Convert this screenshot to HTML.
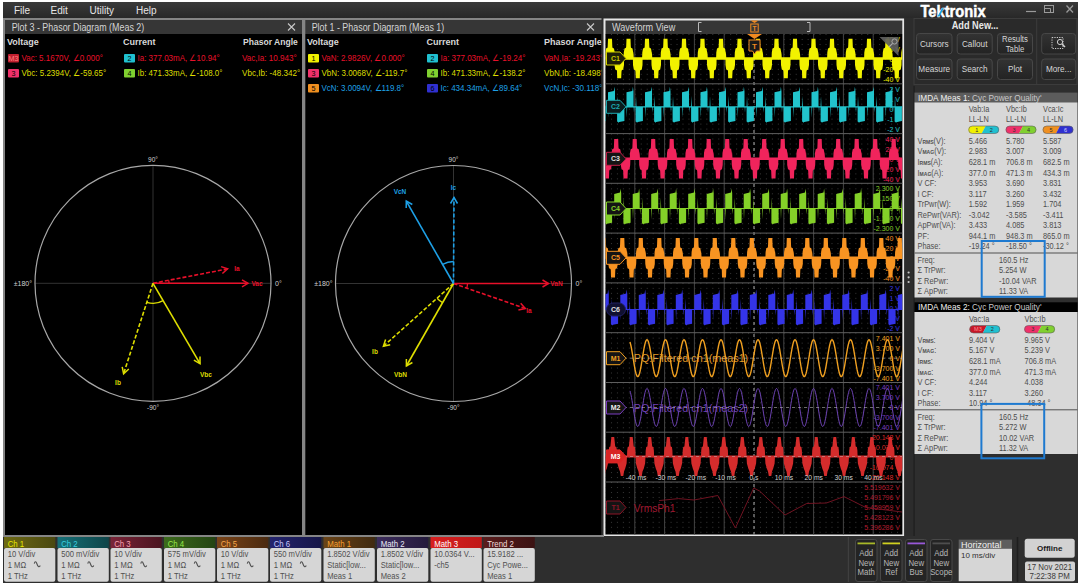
<!DOCTYPE html>
<html><head><meta charset="utf-8"><style>
html,body{margin:0;padding:0;background:#fff;width:1080px;height:586px;overflow:hidden}
svg{display:block;font-family:"Liberation Sans", sans-serif}
</style></head><body>
<svg width="1080" height="586" viewBox="0 0 1080 586">
<rect x="3" y="2" width="1075" height="581" fill="#2e2e2e" />
<defs><linearGradient id="mb" x1="0" y1="0" x2="0" y2="1"><stop offset="0" stop-color="#3a3a3a"/><stop offset="1" stop-color="#282828"/></linearGradient></defs>
<rect x="3" y="2" width="1075" height="16" fill="url(#mb)" />
<text x="14" y="14" font-size="10" fill="#e6e6e6" font-weight="normal" text-anchor="start"  >File</text>
<text x="50.5" y="14" font-size="10" fill="#e6e6e6" font-weight="normal" text-anchor="start"  >Edit</text>
<text x="89.5" y="14" font-size="10" fill="#e6e6e6" font-weight="normal" text-anchor="start"  >Utility</text>
<text x="136" y="14" font-size="10" fill="#e6e6e6" font-weight="normal" text-anchor="start"  >Help</text>
<rect x="3" y="18" width="302" height="518" fill="#858585" />
<rect x="5" y="20" width="298" height="14" fill="#363636" />
<rect x="5" y="34" width="298" height="501" fill="#000" />
<text x="11.7" y="30.5" font-size="10" fill="#d4d4d4" font-weight="normal" text-anchor="start" textLength="132.55" lengthAdjust="spacingAndGlyphs" >Plot 3 - Phasor Diagram (Meas 2)</text>
<path d="M288.0 23.5L295.0 30.5M295.0 23.5L288.0 30.5" stroke="#c8c8c8" stroke-width="1.1"/>
<rect x="303" y="18" width="301" height="518" fill="#858585" />
<rect x="305" y="20" width="297" height="14" fill="#363636" />
<rect x="305" y="34" width="297" height="501" fill="#000" />
<text x="311.7" y="30.5" font-size="10" fill="#d4d4d4" font-weight="normal" text-anchor="start" textLength="132.55" lengthAdjust="spacingAndGlyphs" >Plot 1 - Phasor Diagram (Meas 1)</text>
<path d="M587.0 23.5L594.0 30.5M594.0 23.5L587.0 30.5" stroke="#c8c8c8" stroke-width="1.1"/>
<rect x="601.5" y="18" width="2.5" height="518" fill="#2e2e2e" />
<rect x="302" y="18" width="3.3" height="518" fill="#858585" />
<text x="7" y="45" font-size="9" fill="#d8d8d8" font-weight="bold" text-anchor="start"  >Voltage</text>
<text x="123" y="45" font-size="9" fill="#d8d8d8" font-weight="bold" text-anchor="start"  >Current</text>
<text x="243" y="45" font-size="9" fill="#d8d8d8" font-weight="bold" text-anchor="start" textLength="54.79" lengthAdjust="spacingAndGlyphs" >Phasor Angle</text>
<rect x="8" y="54.0" width="11" height="8.5" fill="#c02030" rx="1"/>
<text x="13.5" y="60.9" font-size="7.2" fill="#ff8080" font-weight="normal" text-anchor="middle"  >M3</text>
<text x="21.5" y="60.5" font-size="9" fill="#e8102a" font-weight="normal" text-anchor="start" textLength="81.37" lengthAdjust="spacingAndGlyphs" >Vac: 5.1670V, ∠0.000°</text>
<rect x="124" y="54.0" width="11" height="8.5" fill="#20c0d0" rx="1"/>
<text x="129.5" y="60.9" font-size="7.2" fill="#000" font-weight="normal" text-anchor="middle"  >2</text>
<text x="137.5" y="60.5" font-size="9" fill="#e8102a" font-weight="normal" text-anchor="start" textLength="82.26" lengthAdjust="spacingAndGlyphs" >Ia: 377.03mA, ∠10.94°</text>
<text x="242" y="60.5" font-size="9" fill="#e8102a" font-weight="normal" text-anchor="start" textLength="54.87" lengthAdjust="spacingAndGlyphs" >Vac,Ia: 10.943°</text>
<rect x="8" y="69.0" width="11" height="8.5" fill="#f0306a" rx="1"/>
<text x="13.5" y="75.9" font-size="7.2" fill="#000" font-weight="normal" text-anchor="middle"  >3</text>
<text x="21.5" y="75.5" font-size="9" fill="#dede00" font-weight="normal" text-anchor="start" textLength="84.67" lengthAdjust="spacingAndGlyphs" >Vbc: 5.2394V, ∠-59.65°</text>
<rect x="124" y="69.0" width="11" height="8.5" fill="#80d030" rx="1"/>
<text x="129.5" y="75.9" font-size="7.2" fill="#000" font-weight="normal" text-anchor="middle"  >4</text>
<text x="137.5" y="75.5" font-size="9" fill="#dede00" font-weight="normal" text-anchor="start" textLength="84.96" lengthAdjust="spacingAndGlyphs" >Ib: 471.33mA, ∠-108.0°</text>
<text x="242" y="75.5" font-size="9" fill="#dede00" font-weight="normal" text-anchor="start" textLength="58.17" lengthAdjust="spacingAndGlyphs" >Vbc,Ib: -48.342°</text>
<text x="307" y="45" font-size="9" fill="#d8d8d8" font-weight="bold" text-anchor="start"  >Voltage</text>
<text x="426.5" y="45" font-size="9" fill="#d8d8d8" font-weight="bold" text-anchor="start"  >Current</text>
<text x="544" y="45" font-size="9" fill="#d8d8d8" font-weight="bold" text-anchor="start"  >Phasor Angle</text>
<rect x="308" y="54.0" width="11" height="8.5" fill="#f0f000" rx="1"/>
<text x="313.5" y="60.9" font-size="7.2" fill="#000" font-weight="normal" text-anchor="middle"  >1</text>
<text x="321.5" y="60.5" font-size="9" fill="#e8102a" font-weight="normal" text-anchor="start" textLength="83.17" lengthAdjust="spacingAndGlyphs" >VaN: 2.9826V, ∠0.000°</text>
<rect x="427" y="54.0" width="11" height="8.5" fill="#20c0d0" rx="1"/>
<text x="432.5" y="60.9" font-size="7.2" fill="#000" font-weight="normal" text-anchor="middle"  >2</text>
<text x="440.5" y="60.5" font-size="9" fill="#e8102a" font-weight="normal" text-anchor="start" textLength="84.96" lengthAdjust="spacingAndGlyphs" >Ia: 377.03mA, ∠-19.24°</text>
<text x="544" y="60.5" font-size="9" fill="#e8102a" font-weight="normal" text-anchor="start" textLength="59.37" lengthAdjust="spacingAndGlyphs" >VaN,Ia: -19.243°</text>
<rect x="308" y="69.0" width="11" height="8.5" fill="#f0306a" rx="1"/>
<text x="313.5" y="75.9" font-size="7.2" fill="#000" font-weight="normal" text-anchor="middle"  >3</text>
<text x="321.5" y="75.5" font-size="9" fill="#dede00" font-weight="normal" text-anchor="start" textLength="85.87" lengthAdjust="spacingAndGlyphs" >VbN: 3.0068V, ∠-119.7°</text>
<rect x="427" y="69.0" width="11" height="8.5" fill="#80d030" rx="1"/>
<text x="432.5" y="75.9" font-size="7.2" fill="#000" font-weight="normal" text-anchor="middle"  >4</text>
<text x="440.5" y="75.5" font-size="9" fill="#dede00" font-weight="normal" text-anchor="start" textLength="84.96" lengthAdjust="spacingAndGlyphs" >Ib: 471.33mA, ∠-138.2°</text>
<text x="544" y="75.5" font-size="9" fill="#dede00" font-weight="normal" text-anchor="start" textLength="59.97" lengthAdjust="spacingAndGlyphs" >VbN,Ib: -18.498°</text>
<rect x="308" y="84.0" width="11" height="8.5" fill="#f09020" rx="1"/>
<text x="313.5" y="90.9" font-size="7.2" fill="#000" font-weight="normal" text-anchor="middle"  >5</text>
<text x="321.5" y="90.5" font-size="9" fill="#1ea0e6" font-weight="normal" text-anchor="start" textLength="82.72" lengthAdjust="spacingAndGlyphs" >VcN: 3.0094V, ∠119.8°</text>
<rect x="427" y="84.0" width="11" height="8.5" fill="#3030d0" rx="1"/>
<text x="432.5" y="90.9" font-size="7.2" fill="#000" font-weight="normal" text-anchor="middle"  >6</text>
<text x="440.5" y="90.5" font-size="9" fill="#1ea0e6" font-weight="normal" text-anchor="start" textLength="81.80" lengthAdjust="spacingAndGlyphs" >Ic: 434.34mA, ∠89.64°</text>
<text x="544" y="90.5" font-size="9" fill="#1ea0e6" font-weight="normal" text-anchor="start" textLength="58.46" lengthAdjust="spacingAndGlyphs" >VcN,Ic: -30.118°</text>
<rect x="601.5" y="34" width="2.5" height="501" fill="#2e2e2e" />
<line x1="35" y1="283.3" x2="271" y2="283.3" stroke="#333333" stroke-width="1"/>
<line x1="153" y1="165.3" x2="153" y2="401.3" stroke="#333333" stroke-width="1"/>
<circle cx="153" cy="283.3" r="118" fill="none" stroke="#a8a8a8" stroke-width="1.2"/>
<text x="153" y="161.8" font-size="6.5" fill="#d0d0d0" font-weight="normal" text-anchor="middle"  >90°</text>
<text x="153" y="410.1" font-size="6.5" fill="#d0d0d0" font-weight="normal" text-anchor="middle"  >-90°</text>
<text x="32" y="285.6" font-size="7" fill="#d0d0d0" font-weight="normal" text-anchor="end"  >±180°</text>
<text x="275" y="285.6" font-size="7" fill="#d0d0d0" font-weight="normal" text-anchor="start"  >0°</text>
<line x1="153" y1="283.3" x2="248.0" y2="283.3" stroke="#e8102a" stroke-width="1.6" />
<path d="M242.0 279.8L248.0 283.3L242.0 286.8" fill="none" stroke="#e8102a" stroke-width="1.5"/>
<text x="257" y="286" font-size="6.5" fill="#e8102a" font-weight="bold" text-anchor="middle"  >Vac</text>
<line x1="153" y1="283.3" x2="227.6" y2="268.9" stroke="#e8102a" stroke-width="1.6" stroke-dasharray="4 2"/>
<path d="M221.1 266.6L227.6 268.9L222.4 273.5" fill="none" stroke="#e8102a" stroke-width="1.5"/>
<text x="237" y="271" font-size="6.5" fill="#e8102a" font-weight="bold" text-anchor="middle"  >Ia</text>
<line x1="153" y1="283.3" x2="200.0" y2="363.6" stroke="#dede00" stroke-width="1.6" />
<path d="M200.0 356.6L200.0 363.6L193.9 360.1" fill="none" stroke="#dede00" stroke-width="1.5"/>
<text x="206" y="377" font-size="6.5" fill="#dede00" font-weight="bold" text-anchor="middle"  >Vbc</text>
<line x1="153" y1="283.3" x2="123.6" y2="373.7" stroke="#dede00" stroke-width="1.6" stroke-dasharray="4 2"/>
<path d="M128.8 369.0L123.6 373.7L122.2 366.9" fill="none" stroke="#dede00" stroke-width="1.5"/>
<text x="118" y="385" font-size="6.5" fill="#dede00" font-weight="bold" text-anchor="middle"  >Ib</text>
<path d="M169.0 283.3A16 16 0 0 0 168.7 280.3" fill="none" stroke="#e8102a" stroke-width="1.3"/>
<path d="M146.8 302.3A20 20 0 0 0 163.1 300.6" fill="none" stroke="#dede00" stroke-width="1.3"/>
<line x1="335.5" y1="283.5" x2="571.5" y2="283.5" stroke="#333333" stroke-width="1"/>
<line x1="453.5" y1="165.5" x2="453.5" y2="401.5" stroke="#333333" stroke-width="1"/>
<circle cx="453.5" cy="283.5" r="118" fill="none" stroke="#a8a8a8" stroke-width="1.2"/>
<text x="453.5" y="162.0" font-size="6.5" fill="#d0d0d0" font-weight="normal" text-anchor="middle"  >90°</text>
<text x="453.5" y="410.3" font-size="6.5" fill="#d0d0d0" font-weight="normal" text-anchor="middle"  >-90°</text>
<text x="332.5" y="285.8" font-size="7" fill="#d0d0d0" font-weight="normal" text-anchor="end"  >±180°</text>
<text x="575.5" y="285.8" font-size="7" fill="#d0d0d0" font-weight="normal" text-anchor="start"  >0°</text>
<line x1="453.5" y1="283.5" x2="548.5" y2="283.5" stroke="#e8102a" stroke-width="1.6" />
<path d="M542.5 280.0L548.5 283.5L542.5 287.0" fill="none" stroke="#e8102a" stroke-width="1.5"/>
<text x="556.5" y="286" font-size="6.5" fill="#e8102a" font-weight="bold" text-anchor="middle"  >VaN</text>
<line x1="453.5" y1="283.5" x2="525.3" y2="308.5" stroke="#e8102a" stroke-width="1.6" stroke-dasharray="4 2"/>
<path d="M520.7 303.3L525.3 308.5L518.4 309.9" fill="none" stroke="#e8102a" stroke-width="1.5"/>
<text x="529" y="313" font-size="6.5" fill="#e8102a" font-weight="bold" text-anchor="middle"  >Ia</text>
<line x1="453.5" y1="283.5" x2="406.4" y2="366.0" stroke="#dede00" stroke-width="1.6" />
<path d="M412.4 362.5L406.4 366.0L406.4 359.1" fill="none" stroke="#dede00" stroke-width="1.5"/>
<text x="400.5" y="377" font-size="6.5" fill="#dede00" font-weight="bold" text-anchor="middle"  >VbN</text>
<line x1="453.5" y1="283.5" x2="383.4" y2="346.2" stroke="#dede00" stroke-width="1.6" stroke-dasharray="4 2"/>
<path d="M390.2 344.8L383.4 346.2L385.6 339.5" fill="none" stroke="#dede00" stroke-width="1.5"/>
<text x="375" y="354" font-size="6.5" fill="#dede00" font-weight="bold" text-anchor="middle"  >Ib</text>
<line x1="453.5" y1="283.5" x2="406.3" y2="201.1" stroke="#1ea0e6" stroke-width="1.6" />
<path d="M406.2 208.0L406.3 201.1L412.3 204.5" fill="none" stroke="#1ea0e6" stroke-width="1.5"/>
<text x="400" y="194" font-size="6.5" fill="#1ea0e6" font-weight="bold" text-anchor="middle"  >VcN</text>
<line x1="453.5" y1="283.5" x2="454.0" y2="197.5" stroke="#1ea0e6" stroke-width="1.6" stroke-dasharray="4 2"/>
<path d="M450.5 203.5L454.0 197.5L457.5 203.5" fill="none" stroke="#1ea0e6" stroke-width="1.5"/>
<text x="453.5" y="190" font-size="6.5" fill="#1ea0e6" font-weight="bold" text-anchor="middle"  >Ic</text>
<path d="M466.7 288.1A14 14 0 0 0 467.5 283.5" fill="none" stroke="#e8102a" stroke-width="1.3"/>
<path d="M437.1 298.2A22 22 0 0 0 442.6 302.6" fill="none" stroke="#dede00" stroke-width="1.3"/>
<path d="M453.6 261.5A22 22 0 0 0 442.6 264.4" fill="none" stroke="#1ea0e6" stroke-width="1.3"/>
<rect x="603.5" y="18.5" width="300.8" height="518" fill="#e6e6e6" />
<rect x="605.5" y="20.5" width="296.8" height="13.5" fill="#363636" />
<rect x="605.5" y="34" width="296.8" height="500.5" fill="#000" />
<text x="612" y="30.5" font-size="10" fill="#d4d4d4" font-weight="normal" text-anchor="start" textLength="63.21" lengthAdjust="spacingAndGlyphs" >Waveform View</text>
<path d="M701.5 22.5H698.5V31.5H701.5M807 22.5H810V31.5H807" fill="none" stroke="#b8b8b8" stroke-width="1"/>
<path d="M750.5 20.5H758.5L754.5 23z" fill="#f08a20"/>
<rect x="750.8" y="24" width="7.4" height="8" fill="none" stroke="#f08a20" stroke-width="1"/>
<text x="754.5" y="30.8" font-size="6.5" fill="#f08a20" font-weight="bold" text-anchor="middle"  >T</text>
<clipPath id="wc"><rect x="605.5" y="34" width="296.8" height="500.5"/></clipPath>
<g clip-path="url(#wc)">
<defs><pattern id="dots" patternUnits="userSpaceOnUse" x="754" y="34" width="5.96" height="4.978"><rect x="0" y="0" width="1" height="1" fill="#363636"/></pattern></defs>
<rect x="605.5" y="34" width="297" height="501" fill="url(#dots)"/>
<line x1="605.0" y1="34" x2="605.0" y2="535" stroke="#444444" stroke-width="1"/>
<line x1="634.8" y1="34" x2="634.8" y2="535" stroke="#444444" stroke-width="1"/>
<line x1="664.6" y1="34" x2="664.6" y2="535" stroke="#444444" stroke-width="1"/>
<line x1="694.4" y1="34" x2="694.4" y2="535" stroke="#444444" stroke-width="1"/>
<line x1="724.2" y1="34" x2="724.2" y2="535" stroke="#444444" stroke-width="1"/>
<line x1="754.0" y1="34" x2="754.0" y2="535" stroke="#b0b0b0" stroke-width="1" stroke-dasharray="3 3"/>
<line x1="783.8" y1="34" x2="783.8" y2="535" stroke="#444444" stroke-width="1"/>
<line x1="813.6" y1="34" x2="813.6" y2="535" stroke="#444444" stroke-width="1"/>
<line x1="843.4" y1="34" x2="843.4" y2="535" stroke="#444444" stroke-width="1"/>
<line x1="873.2" y1="34" x2="873.2" y2="535" stroke="#444444" stroke-width="1"/>
<line x1="903.0" y1="34" x2="903.0" y2="535" stroke="#444444" stroke-width="1"/>
<line x1="605" y1="83.8" x2="903" y2="83.8" stroke="#5e5e5e" stroke-width="1"/>
<line x1="605" y1="133.6" x2="903" y2="133.6" stroke="#5e5e5e" stroke-width="1"/>
<line x1="605" y1="183.3" x2="903" y2="183.3" stroke="#5e5e5e" stroke-width="1"/>
<line x1="605" y1="233.1" x2="903" y2="233.1" stroke="#5e5e5e" stroke-width="1"/>
<line x1="605" y1="282.9" x2="903" y2="282.9" stroke="#5e5e5e" stroke-width="1"/>
<line x1="605" y1="332.7" x2="903" y2="332.7" stroke="#5e5e5e" stroke-width="1"/>
<line x1="605" y1="382.5" x2="903" y2="382.5" stroke="#5e5e5e" stroke-width="1"/>
<line x1="605" y1="432.2" x2="903" y2="432.2" stroke="#5e5e5e" stroke-width="1"/>
<line x1="605" y1="482.0" x2="903" y2="482.0" stroke="#5e5e5e" stroke-width="1"/>
<text x="900" y="42.0" font-size="7" fill="#f2f200" font-weight="normal" text-anchor="end"  >40 V</text>
<text x="900" y="52.0" font-size="7" fill="#f2f200" font-weight="normal" text-anchor="end"  >20 V</text>
<text x="900" y="62.0" font-size="7" fill="#f2f200" font-weight="normal" text-anchor="end"  >0 V</text>
<text x="900" y="72.0" font-size="7" fill="#f2f200" font-weight="normal" text-anchor="end"  >-20 V</text>
<text x="900" y="82.0" font-size="7" fill="#f2f200" font-weight="normal" text-anchor="end"  >-40 V</text>
<text x="900" y="91.78" font-size="7" fill="#22c4cc" font-weight="normal" text-anchor="end"  >2 V</text>
<text x="900" y="101.78" font-size="7" fill="#22c4cc" font-weight="normal" text-anchor="end"  >1 V</text>
<text x="900" y="111.78" font-size="7" fill="#22c4cc" font-weight="normal" text-anchor="end"  >0 V</text>
<text x="900" y="121.78" font-size="7" fill="#22c4cc" font-weight="normal" text-anchor="end"  >-1 V</text>
<text x="900" y="131.78" font-size="7" fill="#22c4cc" font-weight="normal" text-anchor="end"  >-2 V</text>
<text x="900" y="141.56" font-size="7" fill="#f0245c" font-weight="normal" text-anchor="end"  >40 V</text>
<text x="900" y="151.56" font-size="7" fill="#f0245c" font-weight="normal" text-anchor="end"  >20 V</text>
<text x="900" y="161.56" font-size="7" fill="#f0245c" font-weight="normal" text-anchor="end"  >0 V</text>
<text x="900" y="171.56" font-size="7" fill="#f0245c" font-weight="normal" text-anchor="end"  >-20 V</text>
<text x="900" y="181.56" font-size="7" fill="#f0245c" font-weight="normal" text-anchor="end"  >-40 V</text>
<text x="900" y="191.34" font-size="7" fill="#84d028" font-weight="normal" text-anchor="end"  >2.300 V</text>
<text x="900" y="201.34" font-size="7" fill="#84d028" font-weight="normal" text-anchor="end"  >1.150 V</text>
<text x="900" y="211.34" font-size="7" fill="#84d028" font-weight="normal" text-anchor="end"  >0 V</text>
<text x="900" y="221.34" font-size="7" fill="#84d028" font-weight="normal" text-anchor="end"  >-1.150 V</text>
<text x="900" y="231.34" font-size="7" fill="#84d028" font-weight="normal" text-anchor="end"  >-2.300 V</text>
<text x="900" y="241.12" font-size="7" fill="#f89422" font-weight="normal" text-anchor="end"  >40 V</text>
<text x="900" y="251.12" font-size="7" fill="#f89422" font-weight="normal" text-anchor="end"  >20 V</text>
<text x="900" y="261.12" font-size="7" fill="#f89422" font-weight="normal" text-anchor="end"  >0 V</text>
<text x="900" y="271.12" font-size="7" fill="#f89422" font-weight="normal" text-anchor="end"  >-20 V</text>
<text x="900" y="281.12" font-size="7" fill="#f89422" font-weight="normal" text-anchor="end"  >-40 V</text>
<text x="900" y="290.9" font-size="7" fill="#3434e8" font-weight="normal" text-anchor="end"  >2 V</text>
<text x="900" y="300.9" font-size="7" fill="#3434e8" font-weight="normal" text-anchor="end"  >1 V</text>
<text x="900" y="310.9" font-size="7" fill="#3434e8" font-weight="normal" text-anchor="end"  >0 V</text>
<text x="900" y="320.9" font-size="7" fill="#3434e8" font-weight="normal" text-anchor="end"  >-1 V</text>
<text x="900" y="330.9" font-size="7" fill="#3434e8" font-weight="normal" text-anchor="end"  >-2 V</text>
<text x="900" y="340.68" font-size="7" fill="#f0a020" font-weight="normal" text-anchor="end"  >7.401 V</text>
<text x="900" y="350.68" font-size="7" fill="#f0a020" font-weight="normal" text-anchor="end"  >3.700 V</text>
<text x="900" y="360.68" font-size="7" fill="#f0a020" font-weight="normal" text-anchor="end"  >0 V</text>
<text x="900" y="370.68" font-size="7" fill="#f0a020" font-weight="normal" text-anchor="end"  >-3.700 V</text>
<text x="900" y="380.68" font-size="7" fill="#f0a020" font-weight="normal" text-anchor="end"  >-7.401 V</text>
<text x="900" y="390.46000000000004" font-size="7" fill="#7a3cc0" font-weight="normal" text-anchor="end"  >7.401 V</text>
<text x="900" y="400.46000000000004" font-size="7" fill="#7a3cc0" font-weight="normal" text-anchor="end"  >3.700 V</text>
<text x="900" y="410.46000000000004" font-size="7" fill="#7a3cc0" font-weight="normal" text-anchor="end"  >0 V</text>
<text x="900" y="420.46000000000004" font-size="7" fill="#7a3cc0" font-weight="normal" text-anchor="end"  >-3.700 V</text>
<text x="900" y="430.46000000000004" font-size="7" fill="#7a3cc0" font-weight="normal" text-anchor="end"  >-7.401 V</text>
<text x="900" y="440.24" font-size="7" fill="#dc2626" font-weight="normal" text-anchor="end"  >20.148 V</text>
<text x="900" y="450.24" font-size="7" fill="#dc2626" font-weight="normal" text-anchor="end"  >10.074 V</text>
<text x="900" y="460.24" font-size="7" fill="#dc2626" font-weight="normal" text-anchor="end"  >0 V</text>
<text x="900" y="470.24" font-size="7" fill="#dc2626" font-weight="normal" text-anchor="end"  >-10.074 V</text>
<text x="900" y="480.24" font-size="7" fill="#dc2626" font-weight="normal" text-anchor="end"  >-20.148 V</text>
<text x="900" y="490.02" font-size="7" fill="#b01a2c" font-weight="normal" text-anchor="end"  >5.519632 V</text>
<text x="900" y="500.02" font-size="7" fill="#b01a2c" font-weight="normal" text-anchor="end"  >5.491796 V</text>
<text x="900" y="510.02" font-size="7" fill="#b01a2c" font-weight="normal" text-anchor="end"  >5.459959 V</text>
<text x="900" y="520.02" font-size="7" fill="#b01a2c" font-weight="normal" text-anchor="end"  >5.428123 V</text>
<text x="900" y="530.02" font-size="7" fill="#b01a2c" font-weight="normal" text-anchor="end"  >5.396286 V</text>
<path d="M600 57.3H905V59.7H600ZM568.1 58.5L568.3 52.5L569.0 48.5L570.5 47.8L570.7 46.5L571.0 38.7L575.0 38.7L575.3 46.5L575.5 47.8L577.0 48.5L577.7 52.5L577.9 58.5ZM587.1 58.5L587.0 65.1L586.2 69.5L584.8 70.2L584.5 71.5L584.2 78.3L580.2 78.3L580.0 71.5L579.8 70.2L578.2 69.5L577.5 65.1L577.4 58.5ZM577.6 58.5L577.9 51.5L578.3 58.5ZM586.6 58.5L586.8 52.5L587.5 48.5L589.0 47.8L589.2 46.5L589.5 38.7L593.5 38.7L593.8 46.5L594.0 47.8L595.5 48.5L596.2 52.5L596.4 58.5ZM605.6 58.5L605.5 65.1L604.8 69.5L603.2 70.2L603.0 71.5L602.8 78.3L598.8 78.3L598.5 71.5L598.2 70.2L596.8 69.5L596.0 65.1L595.9 58.5ZM596.1 58.5L596.4 51.5L596.8 58.5ZM605.1 58.5L605.3 52.5L606.0 48.5L607.5 47.8L607.7 46.5L608.0 38.7L612.0 38.7L612.3 46.5L612.5 47.8L614.0 48.5L614.7 52.5L614.9 58.5ZM624.1 58.5L624.0 65.1L623.2 69.5L621.8 70.2L621.5 71.5L621.2 78.3L617.2 78.3L617.0 71.5L616.8 70.2L615.2 69.5L614.5 65.1L614.4 58.5ZM614.6 58.5L614.9 51.5L615.3 58.5ZM623.6 58.5L623.8 52.5L624.5 48.5L626.0 47.8L626.2 46.5L626.5 38.7L630.5 38.7L630.8 46.5L631.0 47.8L632.5 48.5L633.2 52.5L633.4 58.5ZM642.6 58.5L642.5 65.1L641.8 69.5L640.2 70.2L640.0 71.5L639.8 78.3L635.8 78.3L635.5 71.5L635.2 70.2L633.8 69.5L633.0 65.1L632.9 58.5ZM633.1 58.5L633.4 51.5L633.8 58.5ZM642.1 58.5L642.3 52.5L643.0 48.5L644.5 47.8L644.7 46.5L645.0 38.7L649.0 38.7L649.3 46.5L649.5 47.8L651.0 48.5L651.7 52.5L651.9 58.5ZM661.1 58.5L661.0 65.1L660.2 69.5L658.8 70.2L658.5 71.5L658.2 78.3L654.2 78.3L654.0 71.5L653.8 70.2L652.2 69.5L651.5 65.1L651.4 58.5ZM651.6 58.5L651.9 51.5L652.3 58.5ZM660.6 58.5L660.8 52.5L661.5 48.5L663.0 47.8L663.2 46.5L663.5 38.7L667.5 38.7L667.8 46.5L668.0 47.8L669.5 48.5L670.2 52.5L670.4 58.5ZM679.6 58.5L679.5 65.1L678.8 69.5L677.2 70.2L677.0 71.5L676.8 78.3L672.8 78.3L672.5 71.5L672.2 70.2L670.8 69.5L670.0 65.1L669.9 58.5ZM670.1 58.5L670.4 51.5L670.8 58.5ZM679.1 58.5L679.3 52.5L680.0 48.5L681.5 47.8L681.7 46.5L682.0 38.7L686.0 38.7L686.3 46.5L686.5 47.8L688.0 48.5L688.7 52.5L688.9 58.5ZM698.1 58.5L698.0 65.1L697.2 69.5L695.8 70.2L695.5 71.5L695.2 78.3L691.2 78.3L691.0 71.5L690.8 70.2L689.2 69.5L688.5 65.1L688.4 58.5ZM688.6 58.5L688.9 51.5L689.3 58.5ZM697.6 58.5L697.8 52.5L698.5 48.5L700.0 47.8L700.2 46.5L700.5 38.7L704.5 38.7L704.8 46.5L705.0 47.8L706.5 48.5L707.2 52.5L707.4 58.5ZM716.6 58.5L716.5 65.1L715.8 69.5L714.2 70.2L714.0 71.5L713.8 78.3L709.8 78.3L709.5 71.5L709.2 70.2L707.8 69.5L707.0 65.1L706.9 58.5ZM707.1 58.5L707.4 51.5L707.8 58.5ZM716.1 58.5L716.3 52.5L717.0 48.5L718.5 47.8L718.7 46.5L719.0 38.7L723.0 38.7L723.3 46.5L723.5 47.8L725.0 48.5L725.7 52.5L725.9 58.5ZM735.1 58.5L735.0 65.1L734.2 69.5L732.8 70.2L732.5 71.5L732.2 78.3L728.2 78.3L728.0 71.5L727.8 70.2L726.2 69.5L725.5 65.1L725.4 58.5ZM725.6 58.5L725.9 51.5L726.3 58.5ZM734.6 58.5L734.8 52.5L735.5 48.5L737.0 47.8L737.2 46.5L737.5 38.7L741.5 38.7L741.8 46.5L742.0 47.8L743.5 48.5L744.2 52.5L744.4 58.5ZM753.6 58.5L753.5 65.1L752.8 69.5L751.2 70.2L751.0 71.5L750.8 78.3L746.8 78.3L746.5 71.5L746.2 70.2L744.8 69.5L744.0 65.1L743.9 58.5ZM744.1 58.5L744.4 51.5L744.8 58.5ZM753.1 58.5L753.3 52.5L754.0 48.5L755.5 47.8L755.7 46.5L756.0 38.7L760.0 38.7L760.3 46.5L760.5 47.8L762.0 48.5L762.7 52.5L762.9 58.5ZM772.1 58.5L772.0 65.1L771.2 69.5L769.8 70.2L769.5 71.5L769.2 78.3L765.2 78.3L765.0 71.5L764.8 70.2L763.2 69.5L762.5 65.1L762.4 58.5ZM762.6 58.5L762.9 51.5L763.3 58.5ZM771.6 58.5L771.8 52.5L772.5 48.5L774.0 47.8L774.2 46.5L774.5 38.7L778.5 38.7L778.8 46.5L779.0 47.8L780.5 48.5L781.2 52.5L781.4 58.5ZM790.6 58.5L790.5 65.1L789.8 69.5L788.2 70.2L788.0 71.5L787.8 78.3L783.8 78.3L783.5 71.5L783.2 70.2L781.8 69.5L781.0 65.1L780.9 58.5ZM781.1 58.5L781.4 51.5L781.8 58.5ZM790.1 58.5L790.3 52.5L791.0 48.5L792.5 47.8L792.7 46.5L793.0 38.7L797.0 38.7L797.3 46.5L797.5 47.8L799.0 48.5L799.7 52.5L799.9 58.5ZM809.1 58.5L809.0 65.1L808.2 69.5L806.8 70.2L806.5 71.5L806.2 78.3L802.2 78.3L802.0 71.5L801.8 70.2L800.2 69.5L799.5 65.1L799.4 58.5ZM799.6 58.5L799.9 51.5L800.3 58.5ZM808.6 58.5L808.8 52.5L809.5 48.5L811.0 47.8L811.2 46.5L811.5 38.7L815.5 38.7L815.8 46.5L816.0 47.8L817.5 48.5L818.2 52.5L818.4 58.5ZM827.6 58.5L827.5 65.1L826.8 69.5L825.2 70.2L825.0 71.5L824.8 78.3L820.8 78.3L820.5 71.5L820.2 70.2L818.8 69.5L818.0 65.1L817.9 58.5ZM818.1 58.5L818.4 51.5L818.8 58.5ZM827.1 58.5L827.3 52.5L828.0 48.5L829.5 47.8L829.7 46.5L830.0 38.7L834.0 38.7L834.3 46.5L834.5 47.8L836.0 48.5L836.7 52.5L836.9 58.5ZM846.1 58.5L846.0 65.1L845.2 69.5L843.8 70.2L843.5 71.5L843.2 78.3L839.2 78.3L839.0 71.5L838.8 70.2L837.2 69.5L836.5 65.1L836.4 58.5ZM836.6 58.5L836.9 51.5L837.3 58.5ZM845.6 58.5L845.8 52.5L846.5 48.5L848.0 47.8L848.2 46.5L848.5 38.7L852.5 38.7L852.8 46.5L853.0 47.8L854.5 48.5L855.2 52.5L855.4 58.5ZM864.6 58.5L864.5 65.1L863.8 69.5L862.2 70.2L862.0 71.5L861.8 78.3L857.8 78.3L857.5 71.5L857.2 70.2L855.8 69.5L855.0 65.1L854.9 58.5ZM855.1 58.5L855.4 51.5L855.8 58.5ZM864.1 58.5L864.3 52.5L865.0 48.5L866.5 47.8L866.7 46.5L867.0 38.7L871.0 38.7L871.3 46.5L871.5 47.8L873.0 48.5L873.7 52.5L873.9 58.5ZM883.1 58.5L883.0 65.1L882.2 69.5L880.8 70.2L880.5 71.5L880.2 78.3L876.2 78.3L876.0 71.5L875.8 70.2L874.2 69.5L873.5 65.1L873.4 58.5ZM873.6 58.5L873.9 51.5L874.3 58.5ZM882.6 58.5L882.8 52.5L883.5 48.5L885.0 47.8L885.2 46.5L885.5 38.7L889.5 38.7L889.8 46.5L890.0 47.8L891.5 48.5L892.2 52.5L892.4 58.5ZM901.6 58.5L901.5 65.1L900.8 69.5L899.2 70.2L899.0 71.5L898.8 78.3L894.8 78.3L894.5 71.5L894.2 70.2L892.8 69.5L892.0 65.1L891.9 58.5ZM892.1 58.5L892.4 51.5L892.8 58.5ZM901.1 58.5L901.3 52.5L902.0 48.5L903.5 47.8L903.7 46.5L904.0 38.7L908.0 38.7L908.3 46.5L908.5 47.8L910.0 48.5L910.7 52.5L910.9 58.5ZM920.1 58.5L920.0 65.1L919.2 69.5L917.8 70.2L917.5 71.5L917.2 78.3L913.2 78.3L913.0 71.5L912.8 70.2L911.2 69.5L910.5 65.1L910.4 58.5ZM910.6 58.5L910.9 51.5L911.3 58.5Z" fill="#f2f200" opacity="1"/>
<path d="M600 106.2H905V107.39999999999999H600ZM571.0 106.8V92.3L576.8 90.9L577.4 86.8L578.0 91.5V106.8ZM587.4 106.8V121.1L582.2 122.1L581.5 122.8L580.9 122.1L580.1 121.6V106.8ZM571.7 106.8L571.3 117.8L570.9 106.8ZM578.9 106.8L578.5 112.8L578.1 106.8ZM580.1 106.8L580.5 95.8L581.0 106.8ZM589.5 106.8V92.3L595.3 90.9L595.9 86.8L596.5 91.5V106.8ZM605.9 106.8V121.1L600.8 122.1L600.0 122.8L599.4 122.1L598.6 121.6V106.8ZM590.2 106.8L589.8 117.8L589.4 106.8ZM597.4 106.8L597.0 112.8L596.6 106.8ZM598.6 106.8L599.0 95.8L599.5 106.8ZM608.0 106.8V92.3L613.8 90.9L614.4 86.8L615.0 91.5V106.8ZM624.4 106.8V121.1L619.2 122.1L618.5 122.8L617.9 122.1L617.1 121.6V106.8ZM608.7 106.8L608.3 117.8L607.9 106.8ZM615.9 106.8L615.5 112.8L615.1 106.8ZM617.1 106.8L617.5 95.8L618.0 106.8ZM626.5 106.8V92.3L632.3 90.9L632.9 86.8L633.5 91.5V106.8ZM642.9 106.8V121.1L637.8 122.1L637.0 122.8L636.4 122.1L635.6 121.6V106.8ZM627.2 106.8L626.8 117.8L626.4 106.8ZM634.4 106.8L634.0 112.8L633.6 106.8ZM635.6 106.8L636.0 95.8L636.5 106.8ZM645.0 106.8V92.3L650.8 90.9L651.4 86.8L652.0 91.5V106.8ZM661.4 106.8V121.1L656.2 122.1L655.5 122.8L654.9 122.1L654.1 121.6V106.8ZM645.7 106.8L645.3 117.8L644.9 106.8ZM652.9 106.8L652.5 112.8L652.1 106.8ZM654.1 106.8L654.5 95.8L655.0 106.8ZM663.5 106.8V92.3L669.3 90.9L669.9 86.8L670.5 91.5V106.8ZM679.9 106.8V121.1L674.8 122.1L674.0 122.8L673.4 122.1L672.6 121.6V106.8ZM664.2 106.8L663.8 117.8L663.4 106.8ZM671.4 106.8L671.0 112.8L670.6 106.8ZM672.6 106.8L673.0 95.8L673.5 106.8ZM682.0 106.8V92.3L687.8 90.9L688.4 86.8L689.0 91.5V106.8ZM698.4 106.8V121.1L693.2 122.1L692.5 122.8L691.9 122.1L691.1 121.6V106.8ZM682.7 106.8L682.3 117.8L681.9 106.8ZM689.9 106.8L689.5 112.8L689.1 106.8ZM691.1 106.8L691.5 95.8L692.0 106.8ZM700.5 106.8V92.3L706.3 90.9L706.9 86.8L707.5 91.5V106.8ZM716.9 106.8V121.1L711.8 122.1L711.0 122.8L710.4 122.1L709.6 121.6V106.8ZM701.2 106.8L700.8 117.8L700.4 106.8ZM708.4 106.8L708.0 112.8L707.6 106.8ZM709.6 106.8L710.0 95.8L710.5 106.8ZM719.0 106.8V92.3L724.8 90.9L725.4 86.8L726.0 91.5V106.8ZM735.4 106.8V121.1L730.2 122.1L729.5 122.8L728.9 122.1L728.1 121.6V106.8ZM719.7 106.8L719.3 117.8L718.9 106.8ZM726.9 106.8L726.5 112.8L726.1 106.8ZM728.1 106.8L728.5 95.8L729.0 106.8ZM737.5 106.8V92.3L743.3 90.9L743.9 86.8L744.5 91.5V106.8ZM753.9 106.8V121.1L748.8 122.1L748.0 122.8L747.4 122.1L746.6 121.6V106.8ZM738.2 106.8L737.8 117.8L737.4 106.8ZM745.4 106.8L745.0 112.8L744.6 106.8ZM746.6 106.8L747.0 95.8L747.5 106.8ZM756.0 106.8V92.3L761.8 90.9L762.4 86.8L763.0 91.5V106.8ZM772.4 106.8V121.1L767.2 122.1L766.5 122.8L765.9 122.1L765.1 121.6V106.8ZM756.7 106.8L756.3 117.8L755.9 106.8ZM763.9 106.8L763.5 112.8L763.1 106.8ZM765.1 106.8L765.5 95.8L766.0 106.8ZM774.5 106.8V92.3L780.3 90.9L780.9 86.8L781.5 91.5V106.8ZM790.9 106.8V121.1L785.8 122.1L785.0 122.8L784.4 122.1L783.6 121.6V106.8ZM775.2 106.8L774.8 117.8L774.4 106.8ZM782.4 106.8L782.0 112.8L781.6 106.8ZM783.6 106.8L784.0 95.8L784.5 106.8ZM793.0 106.8V92.3L798.8 90.9L799.4 86.8L800.0 91.5V106.8ZM809.4 106.8V121.1L804.2 122.1L803.5 122.8L802.9 122.1L802.1 121.6V106.8ZM793.7 106.8L793.3 117.8L792.9 106.8ZM800.9 106.8L800.5 112.8L800.1 106.8ZM802.1 106.8L802.5 95.8L803.0 106.8ZM811.5 106.8V92.3L817.3 90.9L817.9 86.8L818.5 91.5V106.8ZM827.9 106.8V121.1L822.8 122.1L822.0 122.8L821.4 122.1L820.6 121.6V106.8ZM812.2 106.8L811.8 117.8L811.4 106.8ZM819.4 106.8L819.0 112.8L818.6 106.8ZM820.6 106.8L821.0 95.8L821.5 106.8ZM830.0 106.8V92.3L835.8 90.9L836.4 86.8L837.0 91.5V106.8ZM846.4 106.8V121.1L841.2 122.1L840.5 122.8L839.9 122.1L839.1 121.6V106.8ZM830.7 106.8L830.3 117.8L829.9 106.8ZM837.9 106.8L837.5 112.8L837.1 106.8ZM839.1 106.8L839.5 95.8L840.0 106.8ZM848.5 106.8V92.3L854.3 90.9L854.9 86.8L855.5 91.5V106.8ZM864.9 106.8V121.1L859.8 122.1L859.0 122.8L858.4 122.1L857.6 121.6V106.8ZM849.2 106.8L848.8 117.8L848.4 106.8ZM856.4 106.8L856.0 112.8L855.6 106.8ZM857.6 106.8L858.0 95.8L858.5 106.8ZM867.0 106.8V92.3L872.8 90.9L873.4 86.8L874.0 91.5V106.8ZM883.4 106.8V121.1L878.2 122.1L877.5 122.8L876.9 122.1L876.1 121.6V106.8ZM867.7 106.8L867.3 117.8L866.9 106.8ZM874.9 106.8L874.5 112.8L874.1 106.8ZM876.1 106.8L876.5 95.8L877.0 106.8ZM885.5 106.8V92.3L891.3 90.9L891.9 86.8L892.5 91.5V106.8ZM901.9 106.8V121.1L896.8 122.1L896.0 122.8L895.4 122.1L894.6 121.6V106.8ZM886.2 106.8L885.8 117.8L885.4 106.8ZM893.4 106.8L893.0 112.8L892.6 106.8ZM894.6 106.8L895.0 95.8L895.5 106.8ZM904.0 106.8V92.3L909.8 90.9L910.4 86.8L911.0 91.5V106.8ZM920.4 106.8V121.1L915.2 122.1L914.5 122.8L913.9 122.1L913.1 121.6V106.8ZM904.7 106.8L904.3 117.8L903.9 106.8ZM911.9 106.8L911.5 112.8L911.1 106.8ZM913.1 106.8L913.5 95.8L914.0 106.8Z" fill="#22c4cc"/>
<path d="M600 157.60000000000002H905V160.0H600ZM574.3 158.8L574.5 153.1L575.2 149.3L576.7 148.6L576.9 147.3L577.2 139.0L581.2 139.0L581.5 147.3L581.7 148.6L583.2 149.3L583.9 153.1L584.1 158.8ZM593.4 158.8L593.2 165.1L592.5 169.2L591.0 170.0L590.8 171.2L590.5 178.6L586.5 178.6L586.2 171.2L586.0 170.0L584.5 169.2L583.8 165.1L583.6 158.8ZM583.8 158.8L584.1 151.8L584.5 158.8ZM592.8 158.8L593.0 153.1L593.7 149.3L595.2 148.6L595.4 147.3L595.7 139.0L599.7 139.0L600.0 147.3L600.2 148.6L601.7 149.3L602.4 153.1L602.6 158.8ZM611.9 158.8L611.7 165.1L611.0 169.2L609.5 170.0L609.2 171.2L609.0 178.6L605.0 178.6L604.7 171.2L604.5 170.0L603.0 169.2L602.2 165.1L602.1 158.8ZM602.3 158.8L602.6 151.8L603.0 158.8ZM611.3 158.8L611.5 153.1L612.2 149.3L613.7 148.6L613.9 147.3L614.2 139.0L618.2 139.0L618.5 147.3L618.7 148.6L620.2 149.3L620.9 153.1L621.1 158.8ZM630.4 158.8L630.2 165.1L629.5 169.2L628.0 170.0L627.8 171.2L627.5 178.6L623.5 178.6L623.2 171.2L623.0 170.0L621.5 169.2L620.8 165.1L620.6 158.8ZM620.8 158.8L621.1 151.8L621.5 158.8ZM629.8 158.8L630.0 153.1L630.7 149.3L632.2 148.6L632.4 147.3L632.7 139.0L636.7 139.0L637.0 147.3L637.2 148.6L638.7 149.3L639.4 153.1L639.6 158.8ZM648.9 158.8L648.7 165.1L648.0 169.2L646.5 170.0L646.2 171.2L646.0 178.6L642.0 178.6L641.7 171.2L641.5 170.0L640.0 169.2L639.2 165.1L639.1 158.8ZM639.3 158.8L639.6 151.8L640.0 158.8ZM648.3 158.8L648.5 153.1L649.2 149.3L650.7 148.6L650.9 147.3L651.2 139.0L655.2 139.0L655.5 147.3L655.7 148.6L657.2 149.3L657.9 153.1L658.1 158.8ZM667.4 158.8L667.2 165.1L666.5 169.2L665.0 170.0L664.8 171.2L664.5 178.6L660.5 178.6L660.2 171.2L660.0 170.0L658.5 169.2L657.8 165.1L657.6 158.8ZM657.8 158.8L658.1 151.8L658.5 158.8ZM666.8 158.8L667.0 153.1L667.7 149.3L669.2 148.6L669.4 147.3L669.7 139.0L673.7 139.0L674.0 147.3L674.2 148.6L675.7 149.3L676.4 153.1L676.6 158.8ZM685.9 158.8L685.7 165.1L685.0 169.2L683.5 170.0L683.2 171.2L683.0 178.6L679.0 178.6L678.7 171.2L678.5 170.0L677.0 169.2L676.2 165.1L676.1 158.8ZM676.3 158.8L676.6 151.8L677.0 158.8ZM685.3 158.8L685.5 153.1L686.2 149.3L687.7 148.6L687.9 147.3L688.2 139.0L692.2 139.0L692.5 147.3L692.7 148.6L694.2 149.3L694.9 153.1L695.1 158.8ZM704.4 158.8L704.2 165.1L703.5 169.2L702.0 170.0L701.8 171.2L701.5 178.6L697.5 178.6L697.2 171.2L697.0 170.0L695.5 169.2L694.8 165.1L694.6 158.8ZM694.8 158.8L695.1 151.8L695.5 158.8ZM703.8 158.8L704.0 153.1L704.7 149.3L706.2 148.6L706.4 147.3L706.7 139.0L710.7 139.0L711.0 147.3L711.2 148.6L712.7 149.3L713.4 153.1L713.6 158.8ZM722.9 158.8L722.7 165.1L722.0 169.2L720.5 170.0L720.2 171.2L720.0 178.6L716.0 178.6L715.7 171.2L715.5 170.0L714.0 169.2L713.2 165.1L713.1 158.8ZM713.3 158.8L713.6 151.8L714.0 158.8ZM722.3 158.8L722.5 153.1L723.2 149.3L724.7 148.6L724.9 147.3L725.2 139.0L729.2 139.0L729.5 147.3L729.7 148.6L731.2 149.3L731.9 153.1L732.1 158.8ZM741.4 158.8L741.2 165.1L740.5 169.2L739.0 170.0L738.8 171.2L738.5 178.6L734.5 178.6L734.2 171.2L734.0 170.0L732.5 169.2L731.8 165.1L731.6 158.8ZM731.8 158.8L732.1 151.8L732.5 158.8ZM740.8 158.8L741.0 153.1L741.7 149.3L743.2 148.6L743.4 147.3L743.7 139.0L747.7 139.0L748.0 147.3L748.2 148.6L749.7 149.3L750.4 153.1L750.6 158.8ZM759.9 158.8L759.7 165.1L759.0 169.2L757.5 170.0L757.2 171.2L757.0 178.6L753.0 178.6L752.7 171.2L752.5 170.0L751.0 169.2L750.2 165.1L750.1 158.8ZM750.3 158.8L750.6 151.8L751.0 158.8ZM759.3 158.8L759.5 153.1L760.2 149.3L761.7 148.6L761.9 147.3L762.2 139.0L766.2 139.0L766.5 147.3L766.7 148.6L768.2 149.3L768.9 153.1L769.1 158.8ZM778.4 158.8L778.2 165.1L777.5 169.2L776.0 170.0L775.8 171.2L775.5 178.6L771.5 178.6L771.2 171.2L771.0 170.0L769.5 169.2L768.8 165.1L768.6 158.8ZM768.8 158.8L769.1 151.8L769.5 158.8ZM777.8 158.8L778.0 153.1L778.7 149.3L780.2 148.6L780.4 147.3L780.7 139.0L784.7 139.0L785.0 147.3L785.2 148.6L786.7 149.3L787.4 153.1L787.6 158.8ZM796.9 158.8L796.7 165.1L796.0 169.2L794.5 170.0L794.2 171.2L794.0 178.6L790.0 178.6L789.7 171.2L789.5 170.0L788.0 169.2L787.2 165.1L787.1 158.8ZM787.3 158.8L787.6 151.8L788.0 158.8ZM796.3 158.8L796.5 153.1L797.2 149.3L798.7 148.6L798.9 147.3L799.2 139.0L803.2 139.0L803.5 147.3L803.7 148.6L805.2 149.3L805.9 153.1L806.1 158.8ZM815.4 158.8L815.2 165.1L814.5 169.2L813.0 170.0L812.8 171.2L812.5 178.6L808.5 178.6L808.2 171.2L808.0 170.0L806.5 169.2L805.8 165.1L805.6 158.8ZM805.8 158.8L806.1 151.8L806.5 158.8ZM814.8 158.8L815.0 153.1L815.7 149.3L817.2 148.6L817.4 147.3L817.7 139.0L821.7 139.0L822.0 147.3L822.2 148.6L823.7 149.3L824.4 153.1L824.6 158.8ZM833.9 158.8L833.7 165.1L833.0 169.2L831.5 170.0L831.2 171.2L831.0 178.6L827.0 178.6L826.7 171.2L826.5 170.0L825.0 169.2L824.2 165.1L824.1 158.8ZM824.3 158.8L824.6 151.8L825.0 158.8ZM833.3 158.8L833.5 153.1L834.2 149.3L835.7 148.6L835.9 147.3L836.2 139.0L840.2 139.0L840.5 147.3L840.7 148.6L842.2 149.3L842.9 153.1L843.1 158.8ZM852.4 158.8L852.2 165.1L851.5 169.2L850.0 170.0L849.8 171.2L849.5 178.6L845.5 178.6L845.2 171.2L845.0 170.0L843.5 169.2L842.8 165.1L842.6 158.8ZM842.8 158.8L843.1 151.8L843.5 158.8ZM851.8 158.8L852.0 153.1L852.7 149.3L854.2 148.6L854.4 147.3L854.7 139.0L858.7 139.0L859.0 147.3L859.2 148.6L860.7 149.3L861.4 153.1L861.6 158.8ZM870.9 158.8L870.7 165.1L870.0 169.2L868.5 170.0L868.2 171.2L868.0 178.6L864.0 178.6L863.7 171.2L863.5 170.0L862.0 169.2L861.2 165.1L861.1 158.8ZM861.3 158.8L861.6 151.8L862.0 158.8ZM870.3 158.8L870.5 153.1L871.2 149.3L872.7 148.6L872.9 147.3L873.2 139.0L877.2 139.0L877.5 147.3L877.7 148.6L879.2 149.3L879.9 153.1L880.1 158.8ZM889.4 158.8L889.2 165.1L888.5 169.2L887.0 170.0L886.8 171.2L886.5 178.6L882.5 178.6L882.2 171.2L882.0 170.0L880.5 169.2L879.8 165.1L879.6 158.8ZM879.8 158.8L880.1 151.8L880.5 158.8ZM888.8 158.8L889.0 153.1L889.7 149.3L891.2 148.6L891.4 147.3L891.7 139.0L895.7 139.0L896.0 147.3L896.2 148.6L897.7 149.3L898.4 153.1L898.6 158.8ZM907.9 158.8L907.7 165.1L907.0 169.2L905.5 170.0L905.2 171.2L905.0 178.6L901.0 178.6L900.7 171.2L900.5 170.0L899.0 169.2L898.2 165.1L898.1 158.8ZM898.3 158.8L898.6 151.8L899.0 158.8ZM907.3 158.8L907.5 153.1L908.2 149.3L909.7 148.6L909.9 147.3L910.2 139.0L914.2 139.0L914.5 147.3L914.7 148.6L916.2 149.3L916.9 153.1L917.1 158.8ZM926.4 158.8L926.2 165.1L925.5 169.2L924.0 170.0L923.8 171.2L923.5 178.6L919.5 178.6L919.2 171.2L919.0 170.0L917.5 169.2L916.8 165.1L916.6 158.8ZM916.8 158.8L917.1 151.8L917.5 158.8Z" fill="#f0245c" opacity="1"/>
<path d="M600 207.9H905V209.1H600ZM577.2 208.5V194.0L583.0 192.6L583.6 188.5L584.2 193.2V208.5ZM593.6 208.5V222.8L588.5 223.8L587.8 224.5L587.1 223.8L586.4 223.3V208.5ZM577.9 208.5L577.5 219.5L577.1 208.5ZM585.1 208.5L584.7 214.5L584.3 208.5ZM586.4 208.5L586.8 197.5L587.2 208.5ZM595.7 208.5V194.0L601.5 192.6L602.1 188.5L602.7 193.2V208.5ZM612.1 208.5V222.8L607.0 223.8L606.2 224.5L605.6 223.8L604.9 223.3V208.5ZM596.4 208.5L596.0 219.5L595.6 208.5ZM603.6 208.5L603.2 214.5L602.8 208.5ZM604.9 208.5L605.2 197.5L605.7 208.5ZM614.2 208.5V194.0L620.0 192.6L620.6 188.5L621.2 193.2V208.5ZM630.6 208.5V222.8L625.5 223.8L624.8 224.5L624.1 223.8L623.4 223.3V208.5ZM614.9 208.5L614.5 219.5L614.1 208.5ZM622.1 208.5L621.7 214.5L621.3 208.5ZM623.4 208.5L623.8 197.5L624.2 208.5ZM632.7 208.5V194.0L638.5 192.6L639.1 188.5L639.7 193.2V208.5ZM649.1 208.5V222.8L644.0 223.8L643.2 224.5L642.6 223.8L641.9 223.3V208.5ZM633.4 208.5L633.0 219.5L632.6 208.5ZM640.6 208.5L640.2 214.5L639.8 208.5ZM641.9 208.5L642.2 197.5L642.7 208.5ZM651.2 208.5V194.0L657.0 192.6L657.6 188.5L658.2 193.2V208.5ZM667.6 208.5V222.8L662.5 223.8L661.8 224.5L661.1 223.8L660.4 223.3V208.5ZM651.9 208.5L651.5 219.5L651.1 208.5ZM659.1 208.5L658.7 214.5L658.3 208.5ZM660.4 208.5L660.8 197.5L661.2 208.5ZM669.7 208.5V194.0L675.5 192.6L676.1 188.5L676.7 193.2V208.5ZM686.1 208.5V222.8L681.0 223.8L680.2 224.5L679.6 223.8L678.9 223.3V208.5ZM670.4 208.5L670.0 219.5L669.6 208.5ZM677.6 208.5L677.2 214.5L676.8 208.5ZM678.9 208.5L679.2 197.5L679.7 208.5ZM688.2 208.5V194.0L694.0 192.6L694.6 188.5L695.2 193.2V208.5ZM704.6 208.5V222.8L699.5 223.8L698.8 224.5L698.1 223.8L697.4 223.3V208.5ZM688.9 208.5L688.5 219.5L688.1 208.5ZM696.1 208.5L695.7 214.5L695.3 208.5ZM697.4 208.5L697.8 197.5L698.2 208.5ZM706.7 208.5V194.0L712.5 192.6L713.1 188.5L713.7 193.2V208.5ZM723.1 208.5V222.8L718.0 223.8L717.2 224.5L716.6 223.8L715.9 223.3V208.5ZM707.4 208.5L707.0 219.5L706.6 208.5ZM714.6 208.5L714.2 214.5L713.8 208.5ZM715.9 208.5L716.2 197.5L716.7 208.5ZM725.2 208.5V194.0L731.0 192.6L731.6 188.5L732.2 193.2V208.5ZM741.6 208.5V222.8L736.5 223.8L735.8 224.5L735.1 223.8L734.4 223.3V208.5ZM725.9 208.5L725.5 219.5L725.1 208.5ZM733.1 208.5L732.7 214.5L732.3 208.5ZM734.4 208.5L734.8 197.5L735.2 208.5ZM743.7 208.5V194.0L749.5 192.6L750.1 188.5L750.7 193.2V208.5ZM760.1 208.5V222.8L755.0 223.8L754.2 224.5L753.6 223.8L752.9 223.3V208.5ZM744.4 208.5L744.0 219.5L743.6 208.5ZM751.6 208.5L751.2 214.5L750.8 208.5ZM752.9 208.5L753.2 197.5L753.7 208.5ZM762.2 208.5V194.0L768.0 192.6L768.6 188.5L769.2 193.2V208.5ZM778.6 208.5V222.8L773.5 223.8L772.8 224.5L772.1 223.8L771.4 223.3V208.5ZM762.9 208.5L762.5 219.5L762.1 208.5ZM770.1 208.5L769.7 214.5L769.3 208.5ZM771.4 208.5L771.8 197.5L772.2 208.5ZM780.7 208.5V194.0L786.5 192.6L787.1 188.5L787.7 193.2V208.5ZM797.1 208.5V222.8L792.0 223.8L791.2 224.5L790.6 223.8L789.9 223.3V208.5ZM781.4 208.5L781.0 219.5L780.6 208.5ZM788.6 208.5L788.2 214.5L787.8 208.5ZM789.9 208.5L790.2 197.5L790.7 208.5ZM799.2 208.5V194.0L805.0 192.6L805.6 188.5L806.2 193.2V208.5ZM815.6 208.5V222.8L810.5 223.8L809.8 224.5L809.1 223.8L808.4 223.3V208.5ZM799.9 208.5L799.5 219.5L799.1 208.5ZM807.1 208.5L806.7 214.5L806.3 208.5ZM808.4 208.5L808.8 197.5L809.2 208.5ZM817.7 208.5V194.0L823.5 192.6L824.1 188.5L824.7 193.2V208.5ZM834.1 208.5V222.8L829.0 223.8L828.2 224.5L827.6 223.8L826.9 223.3V208.5ZM818.4 208.5L818.0 219.5L817.6 208.5ZM825.6 208.5L825.2 214.5L824.8 208.5ZM826.9 208.5L827.2 197.5L827.7 208.5ZM836.2 208.5V194.0L842.0 192.6L842.6 188.5L843.2 193.2V208.5ZM852.6 208.5V222.8L847.5 223.8L846.8 224.5L846.1 223.8L845.4 223.3V208.5ZM836.9 208.5L836.5 219.5L836.1 208.5ZM844.1 208.5L843.7 214.5L843.3 208.5ZM845.4 208.5L845.8 197.5L846.2 208.5ZM854.7 208.5V194.0L860.5 192.6L861.1 188.5L861.7 193.2V208.5ZM871.1 208.5V222.8L866.0 223.8L865.2 224.5L864.6 223.8L863.9 223.3V208.5ZM855.4 208.5L855.0 219.5L854.6 208.5ZM862.6 208.5L862.2 214.5L861.8 208.5ZM863.9 208.5L864.2 197.5L864.7 208.5ZM873.2 208.5V194.0L879.0 192.6L879.6 188.5L880.2 193.2V208.5ZM889.6 208.5V222.8L884.5 223.8L883.8 224.5L883.1 223.8L882.4 223.3V208.5ZM873.9 208.5L873.5 219.5L873.1 208.5ZM881.1 208.5L880.7 214.5L880.3 208.5ZM882.4 208.5L882.8 197.5L883.2 208.5ZM891.7 208.5V194.0L897.5 192.6L898.1 188.5L898.7 193.2V208.5ZM908.1 208.5V222.8L903.0 223.8L902.2 224.5L901.6 223.8L900.9 223.3V208.5ZM892.4 208.5L892.0 219.5L891.6 208.5ZM899.6 208.5L899.2 214.5L898.8 208.5ZM900.9 208.5L901.2 197.5L901.7 208.5ZM910.2 208.5V194.0L916.0 192.6L916.6 188.5L917.2 193.2V208.5ZM926.6 208.5V222.8L921.5 223.8L920.8 224.5L920.1 223.8L919.4 223.3V208.5ZM910.9 208.5L910.5 219.5L910.1 208.5ZM918.1 208.5L917.7 214.5L917.3 208.5ZM919.4 208.5L919.8 197.5L920.2 208.5Z" fill="#84d028"/>
<path d="M600 256.6H905V259.0H600ZM561.9 257.8L562.1 252.1L562.8 248.3L564.3 247.6L564.5 246.3L564.8 238.0L568.8 238.0L569.1 246.3L569.3 247.6L570.8 248.3L571.5 252.1L571.7 257.8ZM580.9 257.8L580.8 264.1L580.0 268.2L578.5 268.9L578.3 270.2L578.0 277.6L574.0 277.6L573.8 270.2L573.5 268.9L572.0 268.2L571.3 264.1L571.1 257.8ZM571.4 257.8L571.7 250.8L572.1 257.8ZM580.4 257.8L580.6 252.1L581.3 248.3L582.8 247.6L583.0 246.3L583.3 238.0L587.3 238.0L587.6 246.3L587.8 247.6L589.3 248.3L590.0 252.1L590.2 257.8ZM599.4 257.8L599.2 264.1L598.5 268.2L597.0 268.9L596.8 270.2L596.5 277.6L592.5 277.6L592.2 270.2L592.0 268.9L590.5 268.2L589.8 264.1L589.6 257.8ZM589.9 257.8L590.2 250.8L590.6 257.8ZM598.9 257.8L599.1 252.1L599.8 248.3L601.3 247.6L601.5 246.3L601.8 238.0L605.8 238.0L606.1 246.3L606.3 247.6L607.8 248.3L608.5 252.1L608.7 257.8ZM617.9 257.8L617.8 264.1L617.0 268.2L615.5 268.9L615.3 270.2L615.0 277.6L611.0 277.6L610.8 270.2L610.5 268.9L609.0 268.2L608.3 264.1L608.1 257.8ZM608.4 257.8L608.7 250.8L609.1 257.8ZM617.4 257.8L617.6 252.1L618.3 248.3L619.8 247.6L620.0 246.3L620.3 238.0L624.3 238.0L624.6 246.3L624.8 247.6L626.3 248.3L627.0 252.1L627.2 257.8ZM636.4 257.8L636.2 264.1L635.5 268.2L634.0 268.9L633.8 270.2L633.5 277.6L629.5 277.6L629.2 270.2L629.0 268.9L627.5 268.2L626.8 264.1L626.6 257.8ZM626.9 257.8L627.2 250.8L627.6 257.8ZM635.9 257.8L636.1 252.1L636.8 248.3L638.3 247.6L638.5 246.3L638.8 238.0L642.8 238.0L643.1 246.3L643.3 247.6L644.8 248.3L645.5 252.1L645.7 257.8ZM654.9 257.8L654.8 264.1L654.0 268.2L652.5 268.9L652.3 270.2L652.0 277.6L648.0 277.6L647.8 270.2L647.5 268.9L646.0 268.2L645.3 264.1L645.1 257.8ZM645.4 257.8L645.7 250.8L646.1 257.8ZM654.4 257.8L654.6 252.1L655.3 248.3L656.8 247.6L657.0 246.3L657.3 238.0L661.3 238.0L661.6 246.3L661.8 247.6L663.3 248.3L664.0 252.1L664.2 257.8ZM673.4 257.8L673.2 264.1L672.5 268.2L671.0 268.9L670.8 270.2L670.5 277.6L666.5 277.6L666.2 270.2L666.0 268.9L664.5 268.2L663.8 264.1L663.6 257.8ZM663.9 257.8L664.2 250.8L664.6 257.8ZM672.9 257.8L673.1 252.1L673.8 248.3L675.3 247.6L675.5 246.3L675.8 238.0L679.8 238.0L680.1 246.3L680.3 247.6L681.8 248.3L682.5 252.1L682.7 257.8ZM691.9 257.8L691.8 264.1L691.0 268.2L689.5 268.9L689.3 270.2L689.0 277.6L685.0 277.6L684.8 270.2L684.5 268.9L683.0 268.2L682.3 264.1L682.1 257.8ZM682.4 257.8L682.7 250.8L683.1 257.8ZM691.4 257.8L691.6 252.1L692.3 248.3L693.8 247.6L694.0 246.3L694.3 238.0L698.3 238.0L698.6 246.3L698.8 247.6L700.3 248.3L701.0 252.1L701.2 257.8ZM710.4 257.8L710.2 264.1L709.5 268.2L708.0 268.9L707.8 270.2L707.5 277.6L703.5 277.6L703.2 270.2L703.0 268.9L701.5 268.2L700.8 264.1L700.6 257.8ZM700.9 257.8L701.2 250.8L701.6 257.8ZM709.9 257.8L710.1 252.1L710.8 248.3L712.3 247.6L712.5 246.3L712.8 238.0L716.8 238.0L717.1 246.3L717.3 247.6L718.8 248.3L719.5 252.1L719.7 257.8ZM728.9 257.8L728.8 264.1L728.0 268.2L726.5 268.9L726.3 270.2L726.0 277.6L722.0 277.6L721.8 270.2L721.5 268.9L720.0 268.2L719.3 264.1L719.1 257.8ZM719.4 257.8L719.7 250.8L720.1 257.8ZM728.4 257.8L728.6 252.1L729.3 248.3L730.8 247.6L731.0 246.3L731.3 238.0L735.3 238.0L735.6 246.3L735.8 247.6L737.3 248.3L738.0 252.1L738.2 257.8ZM747.4 257.8L747.2 264.1L746.5 268.2L745.0 268.9L744.8 270.2L744.5 277.6L740.5 277.6L740.2 270.2L740.0 268.9L738.5 268.2L737.8 264.1L737.6 257.8ZM737.9 257.8L738.2 250.8L738.6 257.8ZM746.9 257.8L747.1 252.1L747.8 248.3L749.3 247.6L749.5 246.3L749.8 238.0L753.8 238.0L754.1 246.3L754.3 247.6L755.8 248.3L756.5 252.1L756.7 257.8ZM765.9 257.8L765.8 264.1L765.0 268.2L763.5 268.9L763.3 270.2L763.0 277.6L759.0 277.6L758.8 270.2L758.5 268.9L757.0 268.2L756.3 264.1L756.1 257.8ZM756.4 257.8L756.7 250.8L757.1 257.8ZM765.4 257.8L765.6 252.1L766.3 248.3L767.8 247.6L768.0 246.3L768.3 238.0L772.3 238.0L772.6 246.3L772.8 247.6L774.3 248.3L775.0 252.1L775.2 257.8ZM784.4 257.8L784.2 264.1L783.5 268.2L782.0 268.9L781.8 270.2L781.5 277.6L777.5 277.6L777.2 270.2L777.0 268.9L775.5 268.2L774.8 264.1L774.6 257.8ZM774.9 257.8L775.2 250.8L775.6 257.8ZM783.9 257.8L784.1 252.1L784.8 248.3L786.3 247.6L786.5 246.3L786.8 238.0L790.8 238.0L791.1 246.3L791.3 247.6L792.8 248.3L793.5 252.1L793.7 257.8ZM802.9 257.8L802.8 264.1L802.0 268.2L800.5 268.9L800.3 270.2L800.0 277.6L796.0 277.6L795.8 270.2L795.5 268.9L794.0 268.2L793.3 264.1L793.1 257.8ZM793.4 257.8L793.7 250.8L794.1 257.8ZM802.4 257.8L802.6 252.1L803.3 248.3L804.8 247.6L805.0 246.3L805.3 238.0L809.3 238.0L809.6 246.3L809.8 247.6L811.3 248.3L812.0 252.1L812.2 257.8ZM821.4 257.8L821.2 264.1L820.5 268.2L819.0 268.9L818.8 270.2L818.5 277.6L814.5 277.6L814.2 270.2L814.0 268.9L812.5 268.2L811.8 264.1L811.6 257.8ZM811.9 257.8L812.2 250.8L812.6 257.8ZM820.9 257.8L821.1 252.1L821.8 248.3L823.3 247.6L823.5 246.3L823.8 238.0L827.8 238.0L828.1 246.3L828.3 247.6L829.8 248.3L830.5 252.1L830.7 257.8ZM839.9 257.8L839.8 264.1L839.0 268.2L837.5 268.9L837.3 270.2L837.0 277.6L833.0 277.6L832.8 270.2L832.5 268.9L831.0 268.2L830.3 264.1L830.1 257.8ZM830.4 257.8L830.7 250.8L831.1 257.8ZM839.4 257.8L839.6 252.1L840.3 248.3L841.8 247.6L842.0 246.3L842.3 238.0L846.3 238.0L846.6 246.3L846.8 247.6L848.3 248.3L849.0 252.1L849.2 257.8ZM858.4 257.8L858.2 264.1L857.5 268.2L856.0 268.9L855.8 270.2L855.5 277.6L851.5 277.6L851.2 270.2L851.0 268.9L849.5 268.2L848.8 264.1L848.6 257.8ZM848.9 257.8L849.2 250.8L849.6 257.8ZM857.9 257.8L858.1 252.1L858.8 248.3L860.3 247.6L860.5 246.3L860.8 238.0L864.8 238.0L865.1 246.3L865.3 247.6L866.8 248.3L867.5 252.1L867.7 257.8ZM876.9 257.8L876.8 264.1L876.0 268.2L874.5 268.9L874.3 270.2L874.0 277.6L870.0 277.6L869.8 270.2L869.5 268.9L868.0 268.2L867.3 264.1L867.1 257.8ZM867.4 257.8L867.7 250.8L868.1 257.8ZM876.4 257.8L876.6 252.1L877.3 248.3L878.8 247.6L879.0 246.3L879.3 238.0L883.3 238.0L883.6 246.3L883.8 247.6L885.3 248.3L886.0 252.1L886.2 257.8ZM895.4 257.8L895.2 264.1L894.5 268.2L893.0 268.9L892.8 270.2L892.5 277.6L888.5 277.6L888.2 270.2L888.0 268.9L886.5 268.2L885.8 264.1L885.6 257.8ZM885.9 257.8L886.2 250.8L886.6 257.8ZM894.9 257.8L895.1 252.1L895.8 248.3L897.3 247.6L897.5 246.3L897.8 238.0L901.8 238.0L902.1 246.3L902.3 247.6L903.8 248.3L904.5 252.1L904.7 257.8ZM913.9 257.8L913.8 264.1L913.0 268.2L911.5 268.9L911.3 270.2L911.0 277.6L907.0 277.6L906.8 270.2L906.5 268.9L905.0 268.2L904.3 264.1L904.1 257.8ZM904.4 257.8L904.7 250.8L905.1 257.8ZM913.4 257.8L913.6 252.1L914.3 248.3L915.8 247.6L916.0 246.3L916.3 238.0L920.3 238.0L920.6 246.3L920.8 247.6L922.3 248.3L923.0 252.1L923.2 257.8ZM932.4 257.8L932.2 264.1L931.5 268.2L930.0 268.9L929.8 270.2L929.5 277.6L925.5 277.6L925.2 270.2L925.0 268.9L923.5 268.2L922.8 264.1L922.6 257.8ZM922.9 257.8L923.2 250.8L923.6 257.8Z" fill="#f89422" opacity="1"/>
<path d="M600 308.9H905V310.1H600ZM564.8 309.5V295.0L570.6 293.6L571.2 289.5L571.8 294.2V309.5ZM581.1 309.5V323.8L576.0 324.8L575.3 325.5L574.6 324.8L573.9 324.3V309.5ZM565.5 309.5L565.1 320.5L564.7 309.5ZM572.7 309.5L572.3 315.5L571.9 309.5ZM573.9 309.5L574.3 298.5L574.8 309.5ZM583.3 309.5V295.0L589.1 293.6L589.7 289.5L590.3 294.2V309.5ZM599.6 309.5V323.8L594.5 324.8L593.8 325.5L593.1 324.8L592.4 324.3V309.5ZM584.0 309.5L583.6 320.5L583.2 309.5ZM591.2 309.5L590.8 315.5L590.4 309.5ZM592.4 309.5L592.8 298.5L593.2 309.5ZM601.8 309.5V295.0L607.6 293.6L608.2 289.5L608.8 294.2V309.5ZM618.1 309.5V323.8L613.0 324.8L612.3 325.5L611.6 324.8L610.9 324.3V309.5ZM602.5 309.5L602.1 320.5L601.7 309.5ZM609.7 309.5L609.3 315.5L608.9 309.5ZM610.9 309.5L611.3 298.5L611.8 309.5ZM620.3 309.5V295.0L626.1 293.6L626.7 289.5L627.3 294.2V309.5ZM636.6 309.5V323.8L631.5 324.8L630.8 325.5L630.1 324.8L629.4 324.3V309.5ZM621.0 309.5L620.6 320.5L620.2 309.5ZM628.2 309.5L627.8 315.5L627.4 309.5ZM629.4 309.5L629.8 298.5L630.2 309.5ZM638.8 309.5V295.0L644.6 293.6L645.2 289.5L645.8 294.2V309.5ZM655.1 309.5V323.8L650.0 324.8L649.3 325.5L648.6 324.8L647.9 324.3V309.5ZM639.5 309.5L639.1 320.5L638.7 309.5ZM646.7 309.5L646.3 315.5L645.9 309.5ZM647.9 309.5L648.3 298.5L648.8 309.5ZM657.3 309.5V295.0L663.1 293.6L663.7 289.5L664.3 294.2V309.5ZM673.6 309.5V323.8L668.5 324.8L667.8 325.5L667.1 324.8L666.4 324.3V309.5ZM658.0 309.5L657.6 320.5L657.2 309.5ZM665.2 309.5L664.8 315.5L664.4 309.5ZM666.4 309.5L666.8 298.5L667.2 309.5ZM675.8 309.5V295.0L681.6 293.6L682.2 289.5L682.8 294.2V309.5ZM692.1 309.5V323.8L687.0 324.8L686.3 325.5L685.6 324.8L684.9 324.3V309.5ZM676.5 309.5L676.1 320.5L675.7 309.5ZM683.7 309.5L683.3 315.5L682.9 309.5ZM684.9 309.5L685.3 298.5L685.8 309.5ZM694.3 309.5V295.0L700.1 293.6L700.7 289.5L701.3 294.2V309.5ZM710.6 309.5V323.8L705.5 324.8L704.8 325.5L704.1 324.8L703.4 324.3V309.5ZM695.0 309.5L694.6 320.5L694.2 309.5ZM702.2 309.5L701.8 315.5L701.4 309.5ZM703.4 309.5L703.8 298.5L704.2 309.5ZM712.8 309.5V295.0L718.6 293.6L719.2 289.5L719.8 294.2V309.5ZM729.1 309.5V323.8L724.0 324.8L723.3 325.5L722.6 324.8L721.9 324.3V309.5ZM713.5 309.5L713.1 320.5L712.7 309.5ZM720.7 309.5L720.3 315.5L719.9 309.5ZM721.9 309.5L722.3 298.5L722.8 309.5ZM731.3 309.5V295.0L737.1 293.6L737.7 289.5L738.3 294.2V309.5ZM747.6 309.5V323.8L742.5 324.8L741.8 325.5L741.1 324.8L740.4 324.3V309.5ZM732.0 309.5L731.6 320.5L731.2 309.5ZM739.2 309.5L738.8 315.5L738.4 309.5ZM740.4 309.5L740.8 298.5L741.2 309.5ZM749.8 309.5V295.0L755.6 293.6L756.2 289.5L756.8 294.2V309.5ZM766.1 309.5V323.8L761.0 324.8L760.3 325.5L759.6 324.8L758.9 324.3V309.5ZM750.5 309.5L750.1 320.5L749.7 309.5ZM757.7 309.5L757.3 315.5L756.9 309.5ZM758.9 309.5L759.3 298.5L759.8 309.5ZM768.3 309.5V295.0L774.1 293.6L774.7 289.5L775.3 294.2V309.5ZM784.6 309.5V323.8L779.5 324.8L778.8 325.5L778.1 324.8L777.4 324.3V309.5ZM769.0 309.5L768.6 320.5L768.2 309.5ZM776.2 309.5L775.8 315.5L775.4 309.5ZM777.4 309.5L777.8 298.5L778.2 309.5ZM786.8 309.5V295.0L792.6 293.6L793.2 289.5L793.8 294.2V309.5ZM803.1 309.5V323.8L798.0 324.8L797.3 325.5L796.6 324.8L795.9 324.3V309.5ZM787.5 309.5L787.1 320.5L786.7 309.5ZM794.7 309.5L794.3 315.5L793.9 309.5ZM795.9 309.5L796.3 298.5L796.8 309.5ZM805.3 309.5V295.0L811.1 293.6L811.7 289.5L812.3 294.2V309.5ZM821.6 309.5V323.8L816.5 324.8L815.8 325.5L815.1 324.8L814.4 324.3V309.5ZM806.0 309.5L805.6 320.5L805.2 309.5ZM813.2 309.5L812.8 315.5L812.4 309.5ZM814.4 309.5L814.8 298.5L815.2 309.5ZM823.8 309.5V295.0L829.6 293.6L830.2 289.5L830.8 294.2V309.5ZM840.1 309.5V323.8L835.0 324.8L834.3 325.5L833.6 324.8L832.9 324.3V309.5ZM824.5 309.5L824.1 320.5L823.7 309.5ZM831.7 309.5L831.3 315.5L830.9 309.5ZM832.9 309.5L833.3 298.5L833.8 309.5ZM842.3 309.5V295.0L848.1 293.6L848.7 289.5L849.3 294.2V309.5ZM858.6 309.5V323.8L853.5 324.8L852.8 325.5L852.1 324.8L851.4 324.3V309.5ZM843.0 309.5L842.6 320.5L842.2 309.5ZM850.2 309.5L849.8 315.5L849.4 309.5ZM851.4 309.5L851.8 298.5L852.2 309.5ZM860.8 309.5V295.0L866.6 293.6L867.2 289.5L867.8 294.2V309.5ZM877.1 309.5V323.8L872.0 324.8L871.3 325.5L870.6 324.8L869.9 324.3V309.5ZM861.5 309.5L861.1 320.5L860.7 309.5ZM868.7 309.5L868.3 315.5L867.9 309.5ZM869.9 309.5L870.3 298.5L870.8 309.5ZM879.3 309.5V295.0L885.1 293.6L885.7 289.5L886.3 294.2V309.5ZM895.6 309.5V323.8L890.5 324.8L889.8 325.5L889.1 324.8L888.4 324.3V309.5ZM880.0 309.5L879.6 320.5L879.2 309.5ZM887.2 309.5L886.8 315.5L886.4 309.5ZM888.4 309.5L888.8 298.5L889.2 309.5ZM897.8 309.5V295.0L903.6 293.6L904.2 289.5L904.8 294.2V309.5ZM914.1 309.5V323.8L909.0 324.8L908.3 325.5L907.6 324.8L906.9 324.3V309.5ZM898.5 309.5L898.1 320.5L897.7 309.5ZM905.7 309.5L905.3 315.5L904.9 309.5ZM906.9 309.5L907.3 298.5L907.8 309.5ZM916.3 309.5V295.0L922.1 293.6L922.7 289.5L923.3 294.2V309.5ZM932.6 309.5V323.8L927.5 324.8L926.8 325.5L926.1 324.8L925.4 324.3V309.5ZM917.0 309.5L916.6 320.5L916.2 309.5ZM924.2 309.5L923.8 315.5L923.4 309.5ZM925.4 309.5L925.8 298.5L926.2 309.5Z" fill="#3434e8"/>
<text x="633.8" y="362.2" font-size="11" fill="#e09a28" font-weight="normal" text-anchor="start" textLength="114.42" lengthAdjust="spacingAndGlyphs" >PQ:Filtered ch1(meas1)</text>
<text x="633.8" y="411.5" font-size="11" fill="#7040b4" font-weight="normal" text-anchor="start" textLength="114.42" lengthAdjust="spacingAndGlyphs" >PQ:Filtered ch1(meas2)</text>
<text x="633.8" y="511.5" font-size="11" fill="#a01830" font-weight="normal" text-anchor="start" textLength="41.69" lengthAdjust="spacingAndGlyphs" >VrmsPh1</text>
<polyline points="630.0,342.0 630.5,343.8 631.0,346.0 631.5,348.5 632.0,351.3 632.5,354.3 633.0,357.4 633.5,360.5 634.0,363.6 634.5,366.5 635.0,369.2 635.5,371.6 636.0,373.5 636.5,375.1 637.0,376.1 637.5,376.6 638.0,376.6 638.5,376.1 639.0,375.1 639.5,373.5 640.0,371.6 640.5,369.2 641.0,366.5 641.5,363.6 642.0,360.5 642.5,357.4 643.0,354.3 643.5,351.3 644.0,348.5 644.5,346.0 645.0,343.8 645.5,342.0 646.0,340.8 646.5,340.0 647.0,339.7 647.5,340.0 648.0,340.8 648.5,342.0 649.0,343.8 649.5,346.0 650.0,348.5 650.5,351.3 651.0,354.3 651.5,357.4 652.0,360.5 652.5,363.6 653.0,366.5 653.5,369.2 654.0,371.6 654.5,373.5 655.0,375.1 655.5,376.1 656.0,376.6 656.5,376.6 657.0,376.1 657.5,375.1 658.0,373.5 658.5,371.6 659.0,369.2 659.5,366.5 660.0,363.6 660.5,360.5 661.0,357.4 661.5,354.3 662.0,351.3 662.5,348.5 663.0,346.0 663.5,343.8 664.0,342.0 664.5,340.8 665.0,340.0 665.5,339.7 666.0,340.0 666.5,340.8 667.0,342.0 667.5,343.8 668.0,346.0 668.5,348.5 669.0,351.3 669.5,354.3 670.0,357.4 670.5,360.5 671.0,363.6 671.5,366.5 672.0,369.2 672.5,371.6 673.0,373.5 673.5,375.1 674.0,376.1 674.5,376.6 675.0,376.6 675.5,376.1 676.0,375.1 676.5,373.5 677.0,371.6 677.5,369.2 678.0,366.5 678.5,363.6 679.0,360.5 679.5,357.4 680.0,354.3 680.5,351.3 681.0,348.5 681.5,346.0 682.0,343.8 682.5,342.0 683.0,340.8 683.5,340.0 684.0,339.7 684.5,340.0 685.0,340.8 685.5,342.0 686.0,343.8 686.5,346.0 687.0,348.5 687.5,351.3 688.0,354.3 688.5,357.4 689.0,360.5 689.5,363.6 690.0,366.5 690.5,369.2 691.0,371.6 691.5,373.5 692.0,375.1 692.5,376.1 693.0,376.6 693.5,376.6 694.0,376.1 694.5,375.1 695.0,373.5 695.5,371.6 696.0,369.2 696.5,366.5 697.0,363.6 697.5,360.5 698.0,357.4 698.5,354.3 699.0,351.3 699.5,348.5 700.0,346.0 700.5,343.8 701.0,342.0 701.5,340.8 702.0,340.0 702.5,339.7 703.0,340.0 703.5,340.8 704.0,342.0 704.5,343.8 705.0,346.0 705.5,348.5 706.0,351.3 706.5,354.3 707.0,357.4 707.5,360.5 708.0,363.6 708.5,366.5 709.0,369.2 709.5,371.6 710.0,373.5 710.5,375.1 711.0,376.1 711.5,376.6 712.0,376.6 712.5,376.1 713.0,375.1 713.5,373.5 714.0,371.6 714.5,369.2 715.0,366.5 715.5,363.6 716.0,360.5 716.5,357.4 717.0,354.3 717.5,351.3 718.0,348.5 718.5,346.0 719.0,343.8 719.5,342.0 720.0,340.8 720.5,340.0 721.0,339.7 721.5,340.0 722.0,340.8 722.5,342.0 723.0,343.8 723.5,346.0 724.0,348.5 724.5,351.3 725.0,354.3 725.5,357.4 726.0,360.5 726.5,363.6 727.0,366.5 727.5,369.2 728.0,371.6 728.5,373.5 729.0,375.1 729.5,376.1 730.0,376.6 730.5,376.6 731.0,376.1 731.5,375.1 732.0,373.5 732.5,371.6 733.0,369.2 733.5,366.5 734.0,363.6 734.5,360.5 735.0,357.4 735.5,354.3 736.0,351.3 736.5,348.5 737.0,346.0 737.5,343.8 738.0,342.0 738.5,340.8 739.0,340.0 739.5,339.7 740.0,340.0 740.5,340.8 741.0,342.0 741.5,343.8 742.0,346.0 742.5,348.5 743.0,351.3 743.5,354.3 744.0,357.4 744.5,360.5 745.0,363.6 745.5,366.5 746.0,369.2 746.5,371.6 747.0,373.5 747.5,375.1 748.0,376.1 748.5,376.6 749.0,376.6 749.5,376.1 750.0,375.1 750.5,373.5 751.0,371.6 751.5,369.2 752.0,366.5 752.5,363.6 753.0,360.5 753.5,357.4 754.0,354.3 754.5,351.3 755.0,348.5 755.5,346.0 756.0,343.8 756.5,342.0 757.0,340.8 757.5,340.0 758.0,339.7 758.5,340.0 759.0,340.8 759.5,342.0 760.0,343.8 760.5,346.0 761.0,348.5 761.5,351.3 762.0,354.3 762.5,357.4 763.0,360.5 763.5,363.6 764.0,366.5 764.5,369.2 765.0,371.6 765.5,373.5 766.0,375.1 766.5,376.1 767.0,376.6 767.5,376.6 768.0,376.1 768.5,375.1 769.0,373.5 769.5,371.6 770.0,369.2 770.5,366.5 771.0,363.6 771.5,360.5 772.0,357.4 772.5,354.3 773.0,351.3 773.5,348.5 774.0,346.0 774.5,343.8 775.0,342.0 775.5,340.8 776.0,340.0 776.5,339.7 777.0,340.0 777.5,340.8 778.0,342.0 778.5,343.8 779.0,346.0 779.5,348.5 780.0,351.3 780.5,354.3 781.0,357.4 781.5,360.5 782.0,363.6 782.5,366.5 783.0,369.2 783.5,371.6 784.0,373.5 784.5,375.1 785.0,376.1 785.5,376.6 786.0,376.6 786.5,376.1 787.0,375.1 787.5,373.5 788.0,371.6 788.5,369.2 789.0,366.5 789.5,363.6 790.0,360.5 790.5,357.4 791.0,354.3 791.5,351.3 792.0,348.5 792.5,346.0 793.0,343.8 793.5,342.0 794.0,340.8 794.5,340.0 795.0,339.7 795.5,340.0 796.0,340.8 796.5,342.0 797.0,343.8 797.5,346.0 798.0,348.5 798.5,351.3 799.0,354.3 799.5,357.4 800.0,360.5 800.5,363.6 801.0,366.5 801.5,369.2 802.0,371.6 802.5,373.5 803.0,375.1 803.5,376.1 804.0,376.6 804.5,376.6 805.0,376.1 805.5,375.1 806.0,373.5 806.5,371.6 807.0,369.2 807.5,366.5 808.0,363.6 808.5,360.5 809.0,357.4 809.5,354.3 810.0,351.3 810.5,348.5 811.0,346.0 811.5,343.8 812.0,342.0 812.5,340.8 813.0,340.0 813.5,339.7 814.0,340.0 814.5,340.8 815.0,342.0 815.5,343.8 816.0,346.0 816.5,348.5 817.0,351.3 817.5,354.3 818.0,357.4 818.5,360.5 819.0,363.6 819.5,366.5 820.0,369.2 820.5,371.6 821.0,373.5 821.5,375.1 822.0,376.1 822.5,376.6 823.0,376.6 823.5,376.1 824.0,375.1 824.5,373.5 825.0,371.6 825.5,369.2 826.0,366.5 826.5,363.6 827.0,360.5 827.5,357.4 828.0,354.3 828.5,351.3 829.0,348.5 829.5,346.0 830.0,343.8 830.5,342.0 831.0,340.8 831.5,340.0 832.0,339.7 832.5,340.0 833.0,340.8 833.5,342.0 834.0,343.8 834.5,346.0 835.0,348.5 835.5,351.3 836.0,354.3 836.5,357.4 837.0,360.5 837.5,363.6 838.0,366.5 838.5,369.2 839.0,371.6 839.5,373.5 840.0,375.1 840.5,376.1 841.0,376.6 841.5,376.6 842.0,376.1 842.5,375.1 843.0,373.5 843.5,371.6 844.0,369.2 844.5,366.5 845.0,363.6 845.5,360.5 846.0,357.4 846.5,354.3 847.0,351.3 847.5,348.5 848.0,346.0 848.5,343.8 849.0,342.0 849.5,340.8 850.0,340.0 850.5,339.7 851.0,340.0 851.5,340.8 852.0,342.0 852.5,343.8 853.0,346.0 853.5,348.5 854.0,351.3 854.5,354.3 855.0,357.4 855.5,360.5 856.0,363.6 856.5,366.5 857.0,369.2 857.5,371.6 858.0,373.5 858.5,375.1 859.0,376.1 859.5,376.6 860.0,376.6 860.5,376.1 861.0,375.1 861.5,373.5 862.0,371.6 862.5,369.2 863.0,366.5 863.5,363.6 864.0,360.5 864.5,357.4 865.0,354.3 865.5,351.3 866.0,348.5 866.5,346.0 867.0,343.8 867.5,342.0 868.0,340.8 868.5,340.0 869.0,339.7 869.5,340.0 870.0,340.8 870.5,342.0 871.0,343.8 871.5,346.0 872.0,348.5 872.5,351.3 873.0,354.3 873.5,357.4 874.0,360.5 874.5,363.6 875.0,366.5 875.5,369.2 876.0,371.6 876.5,373.5 877.0,375.1 877.5,376.1 878.0,376.6 878.5,376.6 879.0,376.1 879.5,375.1 880.0,373.5 880.5,371.6 881.0,369.2 881.5,366.5 882.0,363.6 882.5,360.5 883.0,357.4 883.5,354.3 884.0,351.3 884.5,348.5 885.0,346.0 885.5,343.8 886.0,342.0 886.5,340.8 887.0,340.0 887.5,339.7 888.0,340.0 888.5,340.8 889.0,342.0 889.5,343.8 890.0,346.0 890.5,348.5 891.0,351.3 891.5,354.3 892.0,357.4 892.5,360.5 893.0,363.6 893.5,366.5 894.0,369.2 894.5,371.6 895.0,373.5 895.5,375.1 896.0,376.1 896.5,376.6 897.0,376.6 897.5,376.1 898.0,375.1 898.5,373.5 899.0,371.6 899.5,369.2 900.0,366.5 900.5,363.6 901.0,360.5 901.5,357.4 902.0,354.3 902.5,351.3 903.0,348.5 903.5,346.0 904.0,343.8 904.5,342.0 905.0,340.8" fill="none" stroke="#f0a020" stroke-width="1.4" opacity="1"/>
<polyline points="630.0,390.9 630.5,392.7 631.0,394.9 631.5,397.5 632.0,400.4 632.5,403.5 633.0,406.7 633.5,409.9 634.0,413.1 634.5,416.1 635.0,418.8 635.5,421.2 636.0,423.2 636.5,424.8 637.0,425.9 637.5,426.4 638.0,426.4 638.5,425.9 639.0,424.8 639.5,423.2 640.0,421.2 640.5,418.8 641.0,416.1 641.5,413.1 642.0,409.9 642.5,406.7 643.0,403.5 643.5,400.4 644.0,397.5 644.5,394.9 645.0,392.7 645.5,390.9 646.0,389.6 646.5,388.8 647.0,388.5 647.5,388.8 648.0,389.6 648.5,390.9 649.0,392.7 649.5,394.9 650.0,397.5 650.5,400.4 651.0,403.5 651.5,406.7 652.0,409.9 652.5,413.1 653.0,416.1 653.5,418.8 654.0,421.2 654.5,423.2 655.0,424.8 655.5,425.9 656.0,426.4 656.5,426.4 657.0,425.9 657.5,424.8 658.0,423.2 658.5,421.2 659.0,418.8 659.5,416.1 660.0,413.1 660.5,409.9 661.0,406.7 661.5,403.5 662.0,400.4 662.5,397.5 663.0,394.9 663.5,392.7 664.0,390.9 664.5,389.6 665.0,388.8 665.5,388.5 666.0,388.8 666.5,389.6 667.0,390.9 667.5,392.7 668.0,394.9 668.5,397.5 669.0,400.4 669.5,403.5 670.0,406.7 670.5,409.9 671.0,413.1 671.5,416.1 672.0,418.8 672.5,421.2 673.0,423.2 673.5,424.8 674.0,425.9 674.5,426.4 675.0,426.4 675.5,425.9 676.0,424.8 676.5,423.2 677.0,421.2 677.5,418.8 678.0,416.1 678.5,413.1 679.0,409.9 679.5,406.7 680.0,403.5 680.5,400.4 681.0,397.5 681.5,394.9 682.0,392.7 682.5,390.9 683.0,389.6 683.5,388.8 684.0,388.5 684.5,388.8 685.0,389.6 685.5,390.9 686.0,392.7 686.5,394.9 687.0,397.5 687.5,400.4 688.0,403.5 688.5,406.7 689.0,409.9 689.5,413.1 690.0,416.1 690.5,418.8 691.0,421.2 691.5,423.2 692.0,424.8 692.5,425.9 693.0,426.4 693.5,426.4 694.0,425.9 694.5,424.8 695.0,423.2 695.5,421.2 696.0,418.8 696.5,416.1 697.0,413.1 697.5,409.9 698.0,406.7 698.5,403.5 699.0,400.4 699.5,397.5 700.0,394.9 700.5,392.7 701.0,390.9 701.5,389.6 702.0,388.8 702.5,388.5 703.0,388.8 703.5,389.6 704.0,390.9 704.5,392.7 705.0,394.9 705.5,397.5 706.0,400.4 706.5,403.5 707.0,406.7 707.5,409.9 708.0,413.1 708.5,416.1 709.0,418.8 709.5,421.2 710.0,423.2 710.5,424.8 711.0,425.9 711.5,426.4 712.0,426.4 712.5,425.9 713.0,424.8 713.5,423.2 714.0,421.2 714.5,418.8 715.0,416.1 715.5,413.1 716.0,409.9 716.5,406.7 717.0,403.5 717.5,400.4 718.0,397.5 718.5,394.9 719.0,392.7 719.5,390.9 720.0,389.6 720.5,388.8 721.0,388.5 721.5,388.8 722.0,389.6 722.5,390.9 723.0,392.7 723.5,394.9 724.0,397.5 724.5,400.4 725.0,403.5 725.5,406.7 726.0,409.9 726.5,413.1 727.0,416.1 727.5,418.8 728.0,421.2 728.5,423.2 729.0,424.8 729.5,425.9 730.0,426.4 730.5,426.4 731.0,425.9 731.5,424.8 732.0,423.2 732.5,421.2 733.0,418.8 733.5,416.1 734.0,413.1 734.5,409.9 735.0,406.7 735.5,403.5 736.0,400.4 736.5,397.5 737.0,394.9 737.5,392.7 738.0,390.9 738.5,389.6 739.0,388.8 739.5,388.5 740.0,388.8 740.5,389.6 741.0,390.9 741.5,392.7 742.0,394.9 742.5,397.5 743.0,400.4 743.5,403.5 744.0,406.7 744.5,409.9 745.0,413.1 745.5,416.1 746.0,418.8 746.5,421.2 747.0,423.2 747.5,424.8 748.0,425.9 748.5,426.4 749.0,426.4 749.5,425.9 750.0,424.8 750.5,423.2 751.0,421.2 751.5,418.8 752.0,416.1 752.5,413.1 753.0,409.9 753.5,406.7 754.0,403.5 754.5,400.4 755.0,397.5 755.5,394.9 756.0,392.7 756.5,390.9 757.0,389.6 757.5,388.8 758.0,388.5 758.5,388.8 759.0,389.6 759.5,390.9 760.0,392.7 760.5,394.9 761.0,397.5 761.5,400.4 762.0,403.5 762.5,406.7 763.0,409.9 763.5,413.1 764.0,416.1 764.5,418.8 765.0,421.2 765.5,423.2 766.0,424.8 766.5,425.9 767.0,426.4 767.5,426.4 768.0,425.9 768.5,424.8 769.0,423.2 769.5,421.2 770.0,418.8 770.5,416.1 771.0,413.1 771.5,409.9 772.0,406.7 772.5,403.5 773.0,400.4 773.5,397.5 774.0,394.9 774.5,392.7 775.0,390.9 775.5,389.6 776.0,388.8 776.5,388.5 777.0,388.8 777.5,389.6 778.0,390.9 778.5,392.7 779.0,394.9 779.5,397.5 780.0,400.4 780.5,403.5 781.0,406.7 781.5,409.9 782.0,413.1 782.5,416.1 783.0,418.8 783.5,421.2 784.0,423.2 784.5,424.8 785.0,425.9 785.5,426.4 786.0,426.4 786.5,425.9 787.0,424.8 787.5,423.2 788.0,421.2 788.5,418.8 789.0,416.1 789.5,413.1 790.0,409.9 790.5,406.7 791.0,403.5 791.5,400.4 792.0,397.5 792.5,394.9 793.0,392.7 793.5,390.9 794.0,389.6 794.5,388.8 795.0,388.5 795.5,388.8 796.0,389.6 796.5,390.9 797.0,392.7 797.5,394.9 798.0,397.5 798.5,400.4 799.0,403.5 799.5,406.7 800.0,409.9 800.5,413.1 801.0,416.1 801.5,418.8 802.0,421.2 802.5,423.2 803.0,424.8 803.5,425.9 804.0,426.4 804.5,426.4 805.0,425.9 805.5,424.8 806.0,423.2 806.5,421.2 807.0,418.8 807.5,416.1 808.0,413.1 808.5,409.9 809.0,406.7 809.5,403.5 810.0,400.4 810.5,397.5 811.0,394.9 811.5,392.7 812.0,390.9 812.5,389.6 813.0,388.8 813.5,388.5 814.0,388.8 814.5,389.6 815.0,390.9 815.5,392.7 816.0,394.9 816.5,397.5 817.0,400.4 817.5,403.5 818.0,406.7 818.5,409.9 819.0,413.1 819.5,416.1 820.0,418.8 820.5,421.2 821.0,423.2 821.5,424.8 822.0,425.9 822.5,426.4 823.0,426.4 823.5,425.9 824.0,424.8 824.5,423.2 825.0,421.2 825.5,418.8 826.0,416.1 826.5,413.1 827.0,409.9 827.5,406.7 828.0,403.5 828.5,400.4 829.0,397.5 829.5,394.9 830.0,392.7 830.5,390.9 831.0,389.6 831.5,388.8 832.0,388.5 832.5,388.8 833.0,389.6 833.5,390.9 834.0,392.7 834.5,394.9 835.0,397.5 835.5,400.4 836.0,403.5 836.5,406.7 837.0,409.9 837.5,413.1 838.0,416.1 838.5,418.8 839.0,421.2 839.5,423.2 840.0,424.8 840.5,425.9 841.0,426.4 841.5,426.4 842.0,425.9 842.5,424.8 843.0,423.2 843.5,421.2 844.0,418.8 844.5,416.1 845.0,413.1 845.5,409.9 846.0,406.7 846.5,403.5 847.0,400.4 847.5,397.5 848.0,394.9 848.5,392.7 849.0,390.9 849.5,389.6 850.0,388.8 850.5,388.5 851.0,388.8 851.5,389.6 852.0,390.9 852.5,392.7 853.0,394.9 853.5,397.5 854.0,400.4 854.5,403.5 855.0,406.7 855.5,409.9 856.0,413.1 856.5,416.1 857.0,418.8 857.5,421.2 858.0,423.2 858.5,424.8 859.0,425.9 859.5,426.4 860.0,426.4 860.5,425.9 861.0,424.8 861.5,423.2 862.0,421.2 862.5,418.8 863.0,416.1 863.5,413.1 864.0,409.9 864.5,406.7 865.0,403.5 865.5,400.4 866.0,397.5 866.5,394.9 867.0,392.7 867.5,390.9 868.0,389.6 868.5,388.8 869.0,388.5 869.5,388.8 870.0,389.6 870.5,390.9 871.0,392.7 871.5,394.9 872.0,397.5 872.5,400.4 873.0,403.5 873.5,406.7 874.0,409.9 874.5,413.1 875.0,416.1 875.5,418.8 876.0,421.2 876.5,423.2 877.0,424.8 877.5,425.9 878.0,426.4 878.5,426.4 879.0,425.9 879.5,424.8 880.0,423.2 880.5,421.2 881.0,418.8 881.5,416.1 882.0,413.1 882.5,409.9 883.0,406.7 883.5,403.5 884.0,400.4 884.5,397.5 885.0,394.9 885.5,392.7 886.0,390.9 886.5,389.6 887.0,388.8 887.5,388.5 888.0,388.8 888.5,389.6 889.0,390.9 889.5,392.7 890.0,394.9 890.5,397.5 891.0,400.4 891.5,403.5 892.0,406.7 892.5,409.9 893.0,413.1 893.5,416.1 894.0,418.8 894.5,421.2 895.0,423.2 895.5,424.8 896.0,425.9 896.5,426.4 897.0,426.4 897.5,425.9 898.0,424.8 898.5,423.2 899.0,421.2 899.5,418.8 900.0,416.1 900.5,413.1 901.0,409.9 901.5,406.7 902.0,403.5 902.5,400.4 903.0,397.5 903.5,394.9 904.0,392.7 904.5,390.9 905.0,389.6" fill="none" stroke="#6e44b4" stroke-width="1.0" opacity="1"/>
<path d="M600 455.4H905V457.4H600ZM571.5 456.4L571.7 450.4L572.2 447.1L573.4 446.4L573.8 442.4L574.4 436.9L577.2 436.9L577.8 442.4L578.2 446.4L579.4 447.1L579.9 450.4L580.1 456.4ZM590.0 456.4L589.6 463.4L588.2 468.4L587.0 471.4L586.3 475.9L583.8 475.9L583.0 471.4L581.8 468.4L580.4 463.4L580.0 456.4ZM590.0 456.4L590.2 450.4L590.7 447.1L591.9 446.4L592.3 442.4L592.9 436.9L595.7 436.9L596.3 442.4L596.7 446.4L597.9 447.1L598.4 450.4L598.6 456.4ZM608.5 456.4L608.1 463.4L606.8 468.4L605.5 471.4L604.8 475.9L602.2 475.9L601.5 471.4L600.3 468.4L598.9 463.4L598.5 456.4ZM608.5 456.4L608.7 450.4L609.2 447.1L610.4 446.4L610.8 442.4L611.4 436.9L614.2 436.9L614.8 442.4L615.2 446.4L616.4 447.1L616.9 450.4L617.1 456.4ZM627.0 456.4L626.6 463.4L625.2 468.4L624.0 471.4L623.3 475.9L620.8 475.9L620.0 471.4L618.8 468.4L617.4 463.4L617.0 456.4ZM627.0 456.4L627.2 450.4L627.7 447.1L628.9 446.4L629.3 442.4L629.9 436.9L632.7 436.9L633.3 442.4L633.7 446.4L634.9 447.1L635.4 450.4L635.6 456.4ZM645.5 456.4L645.1 463.4L643.8 468.4L642.5 471.4L641.8 475.9L639.2 475.9L638.5 471.4L637.3 468.4L635.9 463.4L635.5 456.4ZM645.5 456.4L645.7 450.4L646.2 447.1L647.4 446.4L647.8 442.4L648.4 436.9L651.2 436.9L651.8 442.4L652.2 446.4L653.4 447.1L653.9 450.4L654.1 456.4ZM664.0 456.4L663.6 463.4L662.2 468.4L661.0 471.4L660.3 475.9L657.8 475.9L657.0 471.4L655.8 468.4L654.4 463.4L654.0 456.4ZM664.0 456.4L664.2 450.4L664.7 447.1L665.9 446.4L666.3 442.4L666.9 436.9L669.7 436.9L670.3 442.4L670.7 446.4L671.9 447.1L672.4 450.4L672.6 456.4ZM682.5 456.4L682.1 463.4L680.8 468.4L679.5 471.4L678.8 475.9L676.2 475.9L675.5 471.4L674.3 468.4L672.9 463.4L672.5 456.4ZM682.5 456.4L682.7 450.4L683.2 447.1L684.4 446.4L684.8 442.4L685.4 436.9L688.2 436.9L688.8 442.4L689.2 446.4L690.4 447.1L690.9 450.4L691.1 456.4ZM701.0 456.4L700.6 463.4L699.2 468.4L698.0 471.4L697.3 475.9L694.8 475.9L694.0 471.4L692.8 468.4L691.4 463.4L691.0 456.4ZM701.0 456.4L701.2 450.4L701.7 447.1L702.9 446.4L703.3 442.4L703.9 436.9L706.7 436.9L707.3 442.4L707.7 446.4L708.9 447.1L709.4 450.4L709.6 456.4ZM719.5 456.4L719.1 463.4L717.8 468.4L716.5 471.4L715.8 475.9L713.2 475.9L712.5 471.4L711.3 468.4L709.9 463.4L709.5 456.4ZM719.5 456.4L719.7 450.4L720.2 447.1L721.4 446.4L721.8 442.4L722.4 436.9L725.2 436.9L725.8 442.4L726.2 446.4L727.4 447.1L727.9 450.4L728.1 456.4ZM738.0 456.4L737.6 463.4L736.2 468.4L735.0 471.4L734.3 475.9L731.8 475.9L731.0 471.4L729.8 468.4L728.4 463.4L728.0 456.4ZM738.0 456.4L738.2 450.4L738.7 447.1L739.9 446.4L740.3 442.4L740.9 436.9L743.7 436.9L744.3 442.4L744.7 446.4L745.9 447.1L746.4 450.4L746.6 456.4ZM756.5 456.4L756.1 463.4L754.8 468.4L753.5 471.4L752.8 475.9L750.2 475.9L749.5 471.4L748.3 468.4L746.9 463.4L746.5 456.4ZM756.5 456.4L756.7 450.4L757.2 447.1L758.4 446.4L758.8 442.4L759.4 436.9L762.2 436.9L762.8 442.4L763.2 446.4L764.4 447.1L764.9 450.4L765.1 456.4ZM775.0 456.4L774.6 463.4L773.2 468.4L772.0 471.4L771.3 475.9L768.8 475.9L768.0 471.4L766.8 468.4L765.4 463.4L765.0 456.4ZM775.0 456.4L775.2 450.4L775.7 447.1L776.9 446.4L777.3 442.4L777.9 436.9L780.7 436.9L781.3 442.4L781.7 446.4L782.9 447.1L783.4 450.4L783.6 456.4ZM793.5 456.4L793.1 463.4L791.8 468.4L790.5 471.4L789.8 475.9L787.2 475.9L786.5 471.4L785.3 468.4L783.9 463.4L783.5 456.4ZM793.5 456.4L793.7 450.4L794.2 447.1L795.4 446.4L795.8 442.4L796.4 436.9L799.2 436.9L799.8 442.4L800.2 446.4L801.4 447.1L801.9 450.4L802.1 456.4ZM812.0 456.4L811.6 463.4L810.2 468.4L809.0 471.4L808.3 475.9L805.8 475.9L805.0 471.4L803.8 468.4L802.4 463.4L802.0 456.4ZM812.0 456.4L812.2 450.4L812.7 447.1L813.9 446.4L814.3 442.4L814.9 436.9L817.7 436.9L818.3 442.4L818.7 446.4L819.9 447.1L820.4 450.4L820.6 456.4ZM830.5 456.4L830.1 463.4L828.8 468.4L827.5 471.4L826.8 475.9L824.2 475.9L823.5 471.4L822.3 468.4L820.9 463.4L820.5 456.4ZM830.5 456.4L830.7 450.4L831.2 447.1L832.4 446.4L832.8 442.4L833.4 436.9L836.2 436.9L836.8 442.4L837.2 446.4L838.4 447.1L838.9 450.4L839.1 456.4ZM849.0 456.4L848.6 463.4L847.2 468.4L846.0 471.4L845.3 475.9L842.8 475.9L842.0 471.4L840.8 468.4L839.4 463.4L839.0 456.4ZM849.0 456.4L849.2 450.4L849.7 447.1L850.9 446.4L851.3 442.4L851.9 436.9L854.7 436.9L855.3 442.4L855.7 446.4L856.9 447.1L857.4 450.4L857.6 456.4ZM867.5 456.4L867.1 463.4L865.8 468.4L864.5 471.4L863.8 475.9L861.2 475.9L860.5 471.4L859.3 468.4L857.9 463.4L857.5 456.4ZM867.5 456.4L867.7 450.4L868.2 447.1L869.4 446.4L869.8 442.4L870.4 436.9L873.2 436.9L873.8 442.4L874.2 446.4L875.4 447.1L875.9 450.4L876.1 456.4ZM886.0 456.4L885.6 463.4L884.2 468.4L883.0 471.4L882.3 475.9L879.8 475.9L879.0 471.4L877.8 468.4L876.4 463.4L876.0 456.4ZM886.0 456.4L886.2 450.4L886.7 447.1L887.9 446.4L888.3 442.4L888.9 436.9L891.7 436.9L892.3 442.4L892.7 446.4L893.9 447.1L894.4 450.4L894.6 456.4ZM904.5 456.4L904.1 463.4L902.8 468.4L901.5 471.4L900.8 475.9L898.2 475.9L897.5 471.4L896.3 468.4L894.9 463.4L894.5 456.4ZM904.5 456.4L904.7 450.4L905.2 447.1L906.4 446.4L906.8 442.4L907.4 436.9L910.2 436.9L910.8 442.4L911.2 446.4L912.4 447.1L912.9 450.4L913.1 456.4ZM923.0 456.4L922.6 463.4L921.2 468.4L920.0 471.4L919.3 475.9L916.8 475.9L916.0 471.4L914.8 468.4L913.4 463.4L913.0 456.4Z" fill="#d42c2c"/>
<line x1="606" y1="358.2" x2="902" y2="358.2" stroke="#c0c0c0" stroke-width="0.8" stroke-dasharray="3 3" opacity="0.7"/>
<line x1="606" y1="407.5" x2="902" y2="407.5" stroke="#c0c0c0" stroke-width="0.8" stroke-dasharray="3 3" opacity="0.7"/>
<line x1="606" y1="456.4" x2="902" y2="456.4" stroke="#c0c0c0" stroke-width="0.8" stroke-dasharray="3 3" opacity="0.7"/>
<polyline points="659,500.6 678.5,498.6 694,500 717.8,495.5 735.4,528 753.7,488 759.6,491 785,515 806.7,503.5 826.4,503 844,496.6 865.6,507.4 902,512" fill="none" stroke="#7a1424" stroke-width="0.9"/>
<text x="625.8" y="479.5" font-size="7.5" fill="#cfcfcf" font-weight="normal" text-anchor="start" textLength="20.63" lengthAdjust="spacingAndGlyphs" >-40 ms</text>
<text x="655.6" y="479.5" font-size="7.5" fill="#cfcfcf" font-weight="normal" text-anchor="start" textLength="20.63" lengthAdjust="spacingAndGlyphs" >-30 ms</text>
<text x="685.4" y="479.5" font-size="7.5" fill="#cfcfcf" font-weight="normal" text-anchor="start" textLength="20.63" lengthAdjust="spacingAndGlyphs" >-20 ms</text>
<text x="715.2" y="479.5" font-size="7.5" fill="#cfcfcf" font-weight="normal" text-anchor="start" textLength="20.63" lengthAdjust="spacingAndGlyphs" >-10 ms</text>
<text x="749.5" y="479.5" font-size="7.5" fill="#cfcfcf" font-weight="normal" text-anchor="start" textLength="9.00" lengthAdjust="spacingAndGlyphs" >0 s</text>
<text x="774.8" y="479.5" font-size="7.5" fill="#cfcfcf" font-weight="normal" text-anchor="start" textLength="18.38" lengthAdjust="spacingAndGlyphs" >10 ms</text>
<text x="804.6" y="479.5" font-size="7.5" fill="#cfcfcf" font-weight="normal" text-anchor="start" textLength="18.38" lengthAdjust="spacingAndGlyphs" >20 ms</text>
<text x="834.4" y="479.5" font-size="7.5" fill="#cfcfcf" font-weight="normal" text-anchor="start" textLength="18.38" lengthAdjust="spacingAndGlyphs" >30 ms</text>
<text x="864.2" y="479.5" font-size="7.5" fill="#cfcfcf" font-weight="normal" text-anchor="start" textLength="18.38" lengthAdjust="spacingAndGlyphs" >40 ms</text>
<path d="M606.5 52.0H620L626 58.5L620 65.0H606.5Z" fill="#1e1e08" stroke="#d0d000" stroke-width="1"/>
<text x="615.5" y="61.1" font-size="7" fill="#c8c800" font-weight="bold" text-anchor="middle"  >C1</text>
<path d="M606.5 100.3H620L626 106.8L620 113.3H606.5Z" fill="#0a1c1e" stroke="#1ea8b0" stroke-width="1"/>
<text x="615.5" y="109.39999999999999" font-size="7" fill="#1ea8b0" font-weight="bold" text-anchor="middle"  >C2</text>
<path d="M606.5 152.3H620L626 158.8L620 165.3H606.5Z" fill="#141414" stroke="#c02048" stroke-width="1"/>
<text x="615.5" y="161.4" font-size="7" fill="#e0e0e0" font-weight="bold" text-anchor="middle"  >C3</text>
<path d="M606.5 202.0H620L626 208.5L620 215.0H606.5Z" fill="#141414" stroke="#84d028" stroke-width="1"/>
<text x="615.5" y="211.1" font-size="7" fill="#84d028" font-weight="bold" text-anchor="middle"  >C4</text>
<path d="M606.5 251.3H620L626 257.8L620 264.3H606.5Z" fill="#141414" stroke="#f89422" stroke-width="1"/>
<text x="615.5" y="260.40000000000003" font-size="7" fill="#f89422" font-weight="bold" text-anchor="middle"  >C5</text>
<rect x="606.5" y="303.0" width="19" height="13" rx="6.5" fill="#101030" stroke="#202060" stroke-width="1"/>
<text x="615.5" y="312.1" font-size="7" fill="#e0e0e0" font-weight="bold" text-anchor="middle"  >C6</text>
<path d="M606.5 351.7H620L626 358.2L620 364.7H606.5Z" fill="#141414" stroke="#f0a020" stroke-width="1"/>
<text x="615.5" y="360.8" font-size="7" fill="#f0a020" font-weight="bold" text-anchor="middle"  >M1</text>
<path d="M606.5 401.0H620L626 407.5L620 414.0H606.5Z" fill="#141414" stroke="#7a3cc0" stroke-width="1"/>
<text x="615.5" y="410.1" font-size="7" fill="#f0f0f0" font-weight="bold" text-anchor="middle"  >M2</text>
<path d="M606.5 449.9H620L626 456.4L620 462.9H606.5Z" fill="#d82424" stroke="#dc2626" stroke-width="1"/>
<text x="615.5" y="459.0" font-size="7" fill="#ffffff" font-weight="bold" text-anchor="middle"  >M3</text>
<path d="M606.5 501.0H620L626 507.5L620 514.0H606.5Z" fill="#141414" stroke="#8c1426" stroke-width="1"/>
<text x="615.5" y="510.1" font-size="7" fill="#8c1426" font-weight="bold" text-anchor="middle"  >T1</text>
<path d="M747 34H762L754.5 39z" fill="#f08a20"/>
<path d="M749 40H760V51H756.5L754.5 54L752.5 51H749Z" fill="#1a1a1a" stroke="#f08a20" stroke-width="1"/>
<text x="754.5" y="49" font-size="8" fill="#f08a20" font-weight="bold" text-anchor="middle"  >T</text>
<path d="M879.5 37H898.5V56Z" fill="#5e5e5e" opacity="0.92"/>
<circle cx="894.5" cy="41.5" r="2.6" fill="none" stroke="#a8a8a8" stroke-width="1"/><line x1="892.6" y1="43.4" x2="889" y2="47" stroke="#a8a8a8" stroke-width="1.2"/>
</g>
<rect x="904.3" y="18" width="10" height="518" fill="#2c2c2c" />
<rect x="913.3" y="86" width="1.7" height="450" fill="#222222" />
<circle cx="908.6" cy="272.5" r="1.1" fill="#c8c8c8"/>
<circle cx="908.6" cy="277.3" r="1.1" fill="#c8c8c8"/>
<circle cx="908.6" cy="282" r="1.1" fill="#c8c8c8"/>
<text x="920.4" y="16.8" font-size="16.5" font-weight="bold" fill="#ffffff" stroke="#ffffff" stroke-width="0.5" textLength="65.2" lengthAdjust="spacingAndGlyphs">Tektronix</text>
<path d="M937.5 16.5L942 8.2L944 8.2L939.5 16.5Z" fill="#1aa0e0"/>
<path d="M1026 11.5H1036" stroke="#9a9a9a" stroke-width="1.2"/>
<rect x="1044.5" y="5.5" width="9" height="7" fill="none" stroke="#9a9a9a" stroke-width="1"/><path d="M1044.5 8.5H1050.5V12.5" fill="none" stroke="#9a9a9a" stroke-width="1"/>
<path d="M1066.5 5.5L1073 12.5M1073 5.5L1066.5 12.5" stroke="#9a9a9a" stroke-width="1.3"/>
<rect x="914" y="18.5" width="163" height="66" fill="#2a2a2a" stroke="#3c3c3c" stroke-width="1"/>
<line x1="1036.7" y1="19" x2="1036.7" y2="84" stroke="#3c3c3c" stroke-width="1"/>
<text x="951.7" y="28.5" font-size="10" fill="#e8e8e8" font-weight="bold" text-anchor="start" textLength="46.68" lengthAdjust="spacingAndGlyphs" >Add New...</text>
<defs><linearGradient id="btng" x1="0" y1="0" x2="0" y2="1"><stop offset="0" stop-color="#333333"/><stop offset="1" stop-color="#232323"/></linearGradient></defs>
<rect x="916.5" y="33.5" width="35.5" height="20.5" rx="3" fill="url(#btng)" stroke="#474747" stroke-width="1"/>
<text x="934.25" y="46.95" font-size="9" fill="#d6d6d6" font-weight="normal" text-anchor="middle" textLength="28.67" lengthAdjust="spacingAndGlyphs" >Cursors</text>
<rect x="957.2" y="33.5" width="35" height="20.5" rx="3" fill="url(#btng)" stroke="#474747" stroke-width="1"/>
<text x="974.7" y="46.95" font-size="9" fill="#d6d6d6" font-weight="normal" text-anchor="middle" textLength="25.49" lengthAdjust="spacingAndGlyphs" >Callout</text>
<rect x="997.5" y="33.5" width="35" height="20.5" rx="3" fill="url(#btng)" stroke="#474747" stroke-width="1"/>
<text x="1015.0" y="42.2" font-size="8.5" fill="#d6d6d6" font-weight="normal" text-anchor="middle" textLength="25.79" lengthAdjust="spacingAndGlyphs" >Results</text>
<text x="1015.0" y="51.7" font-size="8.5" fill="#d6d6d6" font-weight="normal" text-anchor="middle" textLength="18.49" lengthAdjust="spacingAndGlyphs" >Table</text>
<rect x="1041.7" y="33.5" width="34" height="20.5" rx="3" fill="url(#btng)" stroke="#474747" stroke-width="1"/>
<rect x="1052" y="37.5" width="11" height="11" fill="none" stroke="#d0d0d0" stroke-width="1" stroke-dasharray="1.2 1.2"/><circle cx="1060" cy="42" r="2.6" fill="none" stroke="#d0d0d0" stroke-width="1"/><path d="M1062 44L1065 47" stroke="#d0d0d0" stroke-width="1.5"/>
<rect x="916.5" y="59" width="35.5" height="20.5" rx="3" fill="url(#btng)" stroke="#474747" stroke-width="1"/>
<text x="934.25" y="72.45" font-size="9" fill="#d6d6d6" font-weight="normal" text-anchor="middle" textLength="31.86" lengthAdjust="spacingAndGlyphs" >Measure</text>
<rect x="957.2" y="59" width="35" height="20.5" rx="3" fill="url(#btng)" stroke="#474747" stroke-width="1"/>
<text x="974.7" y="72.45" font-size="9" fill="#d6d6d6" font-weight="normal" text-anchor="middle" textLength="25.95" lengthAdjust="spacingAndGlyphs" >Search</text>
<rect x="997.5" y="59" width="35" height="20.5" rx="3" fill="url(#btng)" stroke="#474747" stroke-width="1"/>
<text x="1015.0" y="72.45" font-size="9" fill="#d6d6d6" font-weight="normal" text-anchor="middle" textLength="14.11" lengthAdjust="spacingAndGlyphs" >Plot</text>
<rect x="1041.7" y="59" width="34" height="20.5" rx="3" fill="url(#btng)" stroke="#474747" stroke-width="1"/>
<text x="1058.7" y="72.45" font-size="9" fill="#d6d6d6" font-weight="normal" text-anchor="middle" textLength="25.48" lengthAdjust="spacingAndGlyphs" >More...</text>
<rect x="914.5" y="92.6" width="163" height="9.8" fill="#5c5c5c" />
<text x="918" y="100.6" font-size="9.2" fill="#f0f0f0" textLength="123.5" lengthAdjust="spacingAndGlyphs">IMDA Meas 1: <tspan fill="#c8c8c8">Cyc Power Quality'</tspan></text>
<rect x="914.5" y="102.4" width="163" height="195.1" fill="#d8d8d8" />
<text x="968.7" y="111.5" font-size="8.2" fill="#4e4e4e" font-weight="normal" text-anchor="start" textLength="20.79" lengthAdjust="spacingAndGlyphs" >Vab:Ia</text>
<text x="968.7" y="122.3" font-size="8.2" fill="#4e4e4e" font-weight="normal" text-anchor="start" textLength="20.10" lengthAdjust="spacingAndGlyphs" >LL-LN</text>
<text x="1006" y="111.5" font-size="8.2" fill="#4e4e4e" font-weight="normal" text-anchor="start" textLength="20.92" lengthAdjust="spacingAndGlyphs" >Vbc:Ib</text>
<text x="1006" y="122.3" font-size="8.2" fill="#4e4e4e" font-weight="normal" text-anchor="start" textLength="20.10" lengthAdjust="spacingAndGlyphs" >LL-LN</text>
<text x="1043" y="111.5" font-size="8.2" fill="#4e4e4e" font-weight="normal" text-anchor="start" textLength="20.51" lengthAdjust="spacingAndGlyphs" >Vca:Ic</text>
<text x="1043" y="122.3" font-size="8.2" fill="#4e4e4e" font-weight="normal" text-anchor="start" textLength="20.10" lengthAdjust="spacingAndGlyphs" >LL-LN</text>
<path d="M972.2 126H985.7L981.7 133.5H972.2A3.75 3.75 0 0 1 972.2 126Z" fill="#f0f000"/>
<path d="M985.7 126H995.2A3.75 3.75 0 0 1 995.2 133.5H981.7Z" fill="#20c0d0"/>
<rect x="968.7" y="126" width="30" height="7.5" rx="3.75" fill="none" stroke="#606060" stroke-width="0.6"/>
<text x="976.8000000000001" y="131.8" font-size="5.5" fill="#303030" font-weight="normal" text-anchor="middle"  >1</text>
<text x="991.2" y="131.8" font-size="5.5" fill="#303030" font-weight="normal" text-anchor="middle"  >2</text>
<path d="M1009.5 126H1023.0L1019.0 133.5H1009.5A3.75 3.75 0 0 1 1009.5 126Z" fill="#f0306a"/>
<path d="M1023.0 126H1032.5A3.75 3.75 0 0 1 1032.5 133.5H1019.0Z" fill="#80d030"/>
<rect x="1006" y="126" width="30" height="7.5" rx="3.75" fill="none" stroke="#606060" stroke-width="0.6"/>
<text x="1014.1" y="131.8" font-size="5.5" fill="#303030" font-weight="normal" text-anchor="middle"  >3</text>
<text x="1028.5" y="131.8" font-size="5.5" fill="#303030" font-weight="normal" text-anchor="middle"  >4</text>
<path d="M1046.5 126H1060.0L1056.0 133.5H1046.5A3.75 3.75 0 0 1 1046.5 126Z" fill="#f09020"/>
<path d="M1060.0 126H1069.5A3.75 3.75 0 0 1 1069.5 133.5H1056.0Z" fill="#3030d0"/>
<rect x="1043" y="126" width="30" height="7.5" rx="3.75" fill="none" stroke="#606060" stroke-width="0.6"/>
<text x="1051.1" y="131.8" font-size="5.5" fill="#303030" font-weight="normal" text-anchor="middle"  >5</text>
<text x="1065.5" y="131.8" font-size="5.5" fill="#d0d0ff" font-weight="normal" text-anchor="middle"  >6</text>
<text x="917.5" y="143.89999999999998" font-size="8.2" fill="#4e4e4e" textLength="28.01" lengthAdjust="spacingAndGlyphs">V<tspan font-size="5.6" font-weight="bold">RMS</tspan>(V):</text>
<text x="968.7" y="143.89999999999998" font-size="8.2" fill="#4e4e4e" font-weight="normal" text-anchor="start" textLength="18.47" lengthAdjust="spacingAndGlyphs" >5.466</text>
<text x="1006" y="143.89999999999998" font-size="8.2" fill="#4e4e4e" font-weight="normal" text-anchor="start" textLength="18.47" lengthAdjust="spacingAndGlyphs" >5.780</text>
<text x="1043" y="143.89999999999998" font-size="8.2" fill="#4e4e4e" font-weight="normal" text-anchor="start" textLength="18.47" lengthAdjust="spacingAndGlyphs" >5.587</text>
<text x="917.5" y="154.45" font-size="8.2" fill="#4e4e4e" textLength="28.57" lengthAdjust="spacingAndGlyphs">V<tspan font-size="5.6" font-weight="bold">MAG</tspan>(V):</text>
<text x="968.7" y="154.45" font-size="8.2" fill="#4e4e4e" font-weight="normal" text-anchor="start" textLength="18.47" lengthAdjust="spacingAndGlyphs" >2.983</text>
<text x="1006" y="154.45" font-size="8.2" fill="#4e4e4e" font-weight="normal" text-anchor="start" textLength="18.47" lengthAdjust="spacingAndGlyphs" >3.007</text>
<text x="1043" y="154.45" font-size="8.2" fill="#4e4e4e" font-weight="normal" text-anchor="start" textLength="18.47" lengthAdjust="spacingAndGlyphs" >3.009</text>
<text x="917.5" y="164.99999999999997" font-size="8.2" fill="#4e4e4e" textLength="25.14" lengthAdjust="spacingAndGlyphs">I<tspan font-size="5.6" font-weight="bold">RMS</tspan>(A):</text>
<text x="968.7" y="164.99999999999997" font-size="8.2" fill="#4e4e4e" font-weight="normal" text-anchor="start" textLength="26.66" lengthAdjust="spacingAndGlyphs" >628.1 m</text>
<text x="1006" y="164.99999999999997" font-size="8.2" fill="#4e4e4e" font-weight="normal" text-anchor="start" textLength="26.66" lengthAdjust="spacingAndGlyphs" >706.8 m</text>
<text x="1043" y="164.99999999999997" font-size="8.2" fill="#4e4e4e" font-weight="normal" text-anchor="start" textLength="26.66" lengthAdjust="spacingAndGlyphs" >682.5 m</text>
<text x="917.5" y="175.54999999999998" font-size="8.2" fill="#4e4e4e" textLength="25.70" lengthAdjust="spacingAndGlyphs">I<tspan font-size="5.6" font-weight="bold">MAG</tspan>(A):</text>
<text x="968.7" y="175.54999999999998" font-size="8.2" fill="#4e4e4e" font-weight="normal" text-anchor="start" textLength="26.66" lengthAdjust="spacingAndGlyphs" >377.0 m</text>
<text x="1006" y="175.54999999999998" font-size="8.2" fill="#4e4e4e" font-weight="normal" text-anchor="start" textLength="26.66" lengthAdjust="spacingAndGlyphs" >471.3 m</text>
<text x="1043" y="175.54999999999998" font-size="8.2" fill="#4e4e4e" font-weight="normal" text-anchor="start" textLength="26.66" lengthAdjust="spacingAndGlyphs" >434.3 m</text>
<text x="917.5" y="186.09999999999997" font-size="8.2" fill="#4e4e4e" font-weight="normal" text-anchor="start" textLength="18.86" lengthAdjust="spacingAndGlyphs" >V CF:</text>
<text x="968.7" y="186.09999999999997" font-size="8.2" fill="#4e4e4e" font-weight="normal" text-anchor="start" textLength="18.47" lengthAdjust="spacingAndGlyphs" >3.953</text>
<text x="1006" y="186.09999999999997" font-size="8.2" fill="#4e4e4e" font-weight="normal" text-anchor="start" textLength="18.47" lengthAdjust="spacingAndGlyphs" >3.690</text>
<text x="1043" y="186.09999999999997" font-size="8.2" fill="#4e4e4e" font-weight="normal" text-anchor="start" textLength="18.47" lengthAdjust="spacingAndGlyphs" >3.831</text>
<text x="917.5" y="196.64999999999998" font-size="8.2" fill="#4e4e4e" font-weight="normal" text-anchor="start" textLength="15.99" lengthAdjust="spacingAndGlyphs" >I CF:</text>
<text x="968.7" y="196.64999999999998" font-size="8.2" fill="#4e4e4e" font-weight="normal" text-anchor="start" textLength="17.92" lengthAdjust="spacingAndGlyphs" >3.117</text>
<text x="1006" y="196.64999999999998" font-size="8.2" fill="#4e4e4e" font-weight="normal" text-anchor="start" textLength="18.47" lengthAdjust="spacingAndGlyphs" >3.260</text>
<text x="1043" y="196.64999999999998" font-size="8.2" fill="#4e4e4e" font-weight="normal" text-anchor="start" textLength="18.47" lengthAdjust="spacingAndGlyphs" >3.432</text>
<text x="917.5" y="207.2" font-size="8.2" fill="#4e4e4e" font-weight="normal" text-anchor="start" textLength="33.33" lengthAdjust="spacingAndGlyphs" >TrPwr(W):</text>
<text x="968.7" y="207.2" font-size="8.2" fill="#4e4e4e" font-weight="normal" text-anchor="start" textLength="18.47" lengthAdjust="spacingAndGlyphs" >1.592</text>
<text x="1006" y="207.2" font-size="8.2" fill="#4e4e4e" font-weight="normal" text-anchor="start" textLength="18.47" lengthAdjust="spacingAndGlyphs" >1.959</text>
<text x="1043" y="207.2" font-size="8.2" fill="#4e4e4e" font-weight="normal" text-anchor="start" textLength="18.47" lengthAdjust="spacingAndGlyphs" >1.704</text>
<text x="917.5" y="217.75" font-size="8.2" fill="#4e4e4e" font-weight="normal" text-anchor="start" textLength="43.74" lengthAdjust="spacingAndGlyphs" >RePwr(VAR):</text>
<text x="968.7" y="217.75" font-size="8.2" fill="#4e4e4e" font-weight="normal" text-anchor="start" textLength="20.92" lengthAdjust="spacingAndGlyphs" >-3.042</text>
<text x="1006" y="217.75" font-size="8.2" fill="#4e4e4e" font-weight="normal" text-anchor="start" textLength="20.92" lengthAdjust="spacingAndGlyphs" >-3.585</text>
<text x="1043" y="217.75" font-size="8.2" fill="#4e4e4e" font-weight="normal" text-anchor="start" textLength="20.38" lengthAdjust="spacingAndGlyphs" >-3.411</text>
<text x="917.5" y="228.29999999999998" font-size="8.2" fill="#4e4e4e" font-weight="normal" text-anchor="start" textLength="38.00" lengthAdjust="spacingAndGlyphs" >ApPwr(VA):</text>
<text x="968.7" y="228.29999999999998" font-size="8.2" fill="#4e4e4e" font-weight="normal" text-anchor="start" textLength="18.47" lengthAdjust="spacingAndGlyphs" >3.433</text>
<text x="1006" y="228.29999999999998" font-size="8.2" fill="#4e4e4e" font-weight="normal" text-anchor="start" textLength="18.47" lengthAdjust="spacingAndGlyphs" >4.085</text>
<text x="1043" y="228.29999999999998" font-size="8.2" fill="#4e4e4e" font-weight="normal" text-anchor="start" textLength="18.47" lengthAdjust="spacingAndGlyphs" >3.813</text>
<text x="917.5" y="238.84999999999997" font-size="8.2" fill="#4e4e4e" font-weight="normal" text-anchor="start" textLength="11.48" lengthAdjust="spacingAndGlyphs" >PF:</text>
<text x="968.7" y="238.84999999999997" font-size="8.2" fill="#4e4e4e" font-weight="normal" text-anchor="start" textLength="26.66" lengthAdjust="spacingAndGlyphs" >944.1 m</text>
<text x="1006" y="238.84999999999997" font-size="8.2" fill="#4e4e4e" font-weight="normal" text-anchor="start" textLength="26.66" lengthAdjust="spacingAndGlyphs" >948.3 m</text>
<text x="1043" y="238.84999999999997" font-size="8.2" fill="#4e4e4e" font-weight="normal" text-anchor="start" textLength="26.66" lengthAdjust="spacingAndGlyphs" >865.0 m</text>
<text x="917.5" y="249.39999999999998" font-size="8.2" fill="#4e4e4e" font-weight="normal" text-anchor="start" textLength="22.97" lengthAdjust="spacingAndGlyphs" >Phase:</text>
<text x="968.7" y="249.39999999999998" font-size="8.2" fill="#4e4e4e" font-weight="normal" text-anchor="start" textLength="25.92" lengthAdjust="spacingAndGlyphs" >-19.24 °</text>
<text x="1006" y="249.39999999999998" font-size="8.2" fill="#4e4e4e" font-weight="normal" text-anchor="start" textLength="25.92" lengthAdjust="spacingAndGlyphs" >-18.50 °</text>
<text x="1043" y="249.39999999999998" font-size="8.2" fill="#4e4e4e" font-weight="normal" text-anchor="start" textLength="25.92" lengthAdjust="spacingAndGlyphs" >-30.12 °</text>
<line x1="914.5" y1="253" x2="1077.5" y2="253" stroke="#505050" stroke-width="1"/>
<text x="917.5" y="262.59999999999997" font-size="8.2" fill="#4e4e4e" font-weight="normal" text-anchor="start" textLength="17.22" lengthAdjust="spacingAndGlyphs" >Freq:</text>
<text x="999" y="262.59999999999997" font-size="8.2" fill="#4e4e4e" font-weight="normal" text-anchor="start" textLength="29.54" lengthAdjust="spacingAndGlyphs" >160.5 Hz</text>
<text x="917.5" y="273.2" font-size="8.2" fill="#4e4e4e" font-weight="normal" text-anchor="start" textLength="28.06" lengthAdjust="spacingAndGlyphs" >Σ TrPwr:</text>
<text x="999" y="273.2" font-size="8.2" fill="#4e4e4e" font-weight="normal" text-anchor="start" textLength="27.48" lengthAdjust="spacingAndGlyphs" >5.254 W</text>
<text x="917.5" y="283.79999999999995" font-size="8.2" fill="#4e4e4e" font-weight="normal" text-anchor="start" textLength="30.81" lengthAdjust="spacingAndGlyphs" >Σ RePwr:</text>
<text x="999" y="283.79999999999995" font-size="8.2" fill="#4e4e4e" font-weight="normal" text-anchor="start" textLength="37.60" lengthAdjust="spacingAndGlyphs" >-10.04 VAR</text>
<text x="917.5" y="294.4" font-size="8.2" fill="#4e4e4e" font-weight="normal" text-anchor="start" textLength="30.40" lengthAdjust="spacingAndGlyphs" >Σ ApPwr:</text>
<text x="999" y="294.4" font-size="8.2" fill="#4e4e4e" font-weight="normal" text-anchor="start" textLength="29.27" lengthAdjust="spacingAndGlyphs" >11.33 VA</text>
<rect x="981.7" y="241" width="63" height="55.8" fill="none" stroke="#1e7ad0" stroke-width="2"/>
<rect x="914.5" y="302.3" width="163" height="9.7" fill="#000" />
<text x="918" y="310.3" font-size="9.2" fill="#f0f0f0" textLength="123.5" lengthAdjust="spacingAndGlyphs">IMDA Meas 2: <tspan fill="#c8c8c8">Cyc Power Quality'</tspan></text>
<rect x="914.5" y="312" width="163" height="142" fill="#d8d8d8" />
<text x="969" y="321.7" font-size="8.2" fill="#4e4e4e" font-weight="normal" text-anchor="start" textLength="20.37" lengthAdjust="spacingAndGlyphs" >Vac:Ia</text>
<text x="1024.6" y="321.7" font-size="8.2" fill="#4e4e4e" font-weight="normal" text-anchor="start" textLength="20.92" lengthAdjust="spacingAndGlyphs" >Vbc:Ib</text>
<path d="M973.3 325.5H986.8L982.8 333.0H973.3A3.75 3.75 0 0 1 973.3 325.5Z" fill="#c81828"/>
<path d="M986.8 325.5H996.3A3.75 3.75 0 0 1 996.3 333.0H982.8Z" fill="#20c0d0"/>
<rect x="969.8" y="325.5" width="30" height="7.5" rx="3.75" fill="none" stroke="#606060" stroke-width="0.6"/>
<text x="977.9" y="331.3" font-size="5.5" fill="#ff9090" font-weight="normal" text-anchor="middle"  >M3</text>
<text x="992.3" y="331.3" font-size="5.5" fill="#303030" font-weight="normal" text-anchor="middle"  >2</text>
<path d="M1028.1 325.5H1041.6L1037.6 333.0H1028.1A3.75 3.75 0 0 1 1028.1 325.5Z" fill="#f0306a"/>
<path d="M1041.6 325.5H1051.1A3.75 3.75 0 0 1 1051.1 333.0H1037.6Z" fill="#80d030"/>
<rect x="1024.6" y="325.5" width="30" height="7.5" rx="3.75" fill="none" stroke="#606060" stroke-width="0.6"/>
<text x="1032.6999999999998" y="331.3" font-size="5.5" fill="#303030" font-weight="normal" text-anchor="middle"  >3</text>
<text x="1047.1" y="331.3" font-size="5.5" fill="#303030" font-weight="normal" text-anchor="middle"  >4</text>
<text x="917.5" y="342.8" font-size="8.2" fill="#4e4e4e" textLength="18.17" lengthAdjust="spacingAndGlyphs">V<tspan font-size="5.6" font-weight="bold">RMS</tspan>:</text>
<text x="969" y="342.8" font-size="8.2" fill="#4e4e4e" font-weight="normal" text-anchor="start" textLength="25.44" lengthAdjust="spacingAndGlyphs" >9.404 V</text>
<text x="1024.6" y="342.8" font-size="8.2" fill="#4e4e4e" font-weight="normal" text-anchor="start" textLength="25.44" lengthAdjust="spacingAndGlyphs" >9.965 V</text>
<text x="917.5" y="353.37" font-size="8.2" fill="#4e4e4e" textLength="18.73" lengthAdjust="spacingAndGlyphs">V<tspan font-size="5.6" font-weight="bold">MAG</tspan>:</text>
<text x="969" y="353.37" font-size="8.2" fill="#4e4e4e" font-weight="normal" text-anchor="start" textLength="25.44" lengthAdjust="spacingAndGlyphs" >5.167 V</text>
<text x="1024.6" y="353.37" font-size="8.2" fill="#4e4e4e" font-weight="normal" text-anchor="start" textLength="25.44" lengthAdjust="spacingAndGlyphs" >5.239 V</text>
<text x="917.5" y="363.94" font-size="8.2" fill="#4e4e4e" textLength="15.30" lengthAdjust="spacingAndGlyphs">I<tspan font-size="5.6" font-weight="bold">RMS</tspan>:</text>
<text x="969" y="363.94" font-size="8.2" fill="#4e4e4e" font-weight="normal" text-anchor="start" textLength="31.59" lengthAdjust="spacingAndGlyphs" >628.1 mA</text>
<text x="1024.6" y="363.94" font-size="8.2" fill="#4e4e4e" font-weight="normal" text-anchor="start" textLength="31.59" lengthAdjust="spacingAndGlyphs" >706.8 mA</text>
<text x="917.5" y="374.51" font-size="8.2" fill="#4e4e4e" textLength="15.86" lengthAdjust="spacingAndGlyphs">I<tspan font-size="5.6" font-weight="bold">MAG</tspan>:</text>
<text x="969" y="374.51" font-size="8.2" fill="#4e4e4e" font-weight="normal" text-anchor="start" textLength="31.59" lengthAdjust="spacingAndGlyphs" >377.0 mA</text>
<text x="1024.6" y="374.51" font-size="8.2" fill="#4e4e4e" font-weight="normal" text-anchor="start" textLength="31.59" lengthAdjust="spacingAndGlyphs" >471.3 mA</text>
<text x="917.5" y="385.08" font-size="8.2" fill="#4e4e4e" font-weight="normal" text-anchor="start" textLength="18.86" lengthAdjust="spacingAndGlyphs" >V CF:</text>
<text x="969" y="385.08" font-size="8.2" fill="#4e4e4e" font-weight="normal" text-anchor="start" textLength="18.47" lengthAdjust="spacingAndGlyphs" >4.244</text>
<text x="1024.6" y="385.08" font-size="8.2" fill="#4e4e4e" font-weight="normal" text-anchor="start" textLength="18.47" lengthAdjust="spacingAndGlyphs" >4.038</text>
<text x="917.5" y="395.65000000000003" font-size="8.2" fill="#4e4e4e" font-weight="normal" text-anchor="start" textLength="15.99" lengthAdjust="spacingAndGlyphs" >I CF:</text>
<text x="969" y="395.65000000000003" font-size="8.2" fill="#4e4e4e" font-weight="normal" text-anchor="start" textLength="17.92" lengthAdjust="spacingAndGlyphs" >3.117</text>
<text x="1024.6" y="395.65000000000003" font-size="8.2" fill="#4e4e4e" font-weight="normal" text-anchor="start" textLength="18.47" lengthAdjust="spacingAndGlyphs" >3.260</text>
<text x="917.5" y="406.22" font-size="8.2" fill="#4e4e4e" font-weight="normal" text-anchor="start" textLength="22.97" lengthAdjust="spacingAndGlyphs" >Phase:</text>
<text x="969" y="406.22" font-size="8.2" fill="#4e4e4e" font-weight="normal" text-anchor="start" textLength="23.47" lengthAdjust="spacingAndGlyphs" >10.94 °</text>
<text x="1024.6" y="406.22" font-size="8.2" fill="#4e4e4e" font-weight="normal" text-anchor="start" textLength="25.92" lengthAdjust="spacingAndGlyphs" >-48.34 °</text>
<line x1="914.5" y1="409.8" x2="1077.5" y2="409.8" stroke="#505050" stroke-width="1"/>
<text x="917.5" y="419.7" font-size="8.2" fill="#4e4e4e" font-weight="normal" text-anchor="start" textLength="17.22" lengthAdjust="spacingAndGlyphs" >Freq:</text>
<text x="999" y="419.7" font-size="8.2" fill="#4e4e4e" font-weight="normal" text-anchor="start" textLength="29.54" lengthAdjust="spacingAndGlyphs" >160.5 Hz</text>
<text x="917.5" y="430.2" font-size="8.2" fill="#4e4e4e" font-weight="normal" text-anchor="start" textLength="28.06" lengthAdjust="spacingAndGlyphs" >Σ TrPwr:</text>
<text x="999" y="430.2" font-size="8.2" fill="#4e4e4e" font-weight="normal" text-anchor="start" textLength="27.48" lengthAdjust="spacingAndGlyphs" >5.272 W</text>
<text x="917.5" y="440.7" font-size="8.2" fill="#4e4e4e" font-weight="normal" text-anchor="start" textLength="30.81" lengthAdjust="spacingAndGlyphs" >Σ RePwr:</text>
<text x="999" y="440.7" font-size="8.2" fill="#4e4e4e" font-weight="normal" text-anchor="start" textLength="35.14" lengthAdjust="spacingAndGlyphs" >10.02 VAR</text>
<text x="917.5" y="451.2" font-size="8.2" fill="#4e4e4e" font-weight="normal" text-anchor="start" textLength="30.40" lengthAdjust="spacingAndGlyphs" >Σ ApPwr:</text>
<text x="999" y="451.2" font-size="8.2" fill="#4e4e4e" font-weight="normal" text-anchor="start" textLength="29.27" lengthAdjust="spacingAndGlyphs" >11.32 VA</text>
<rect x="981.4" y="403.9" width="62.8" height="54.4" fill="none" stroke="#1e7ad0" stroke-width="2"/>
<rect x="3" y="536" width="1075" height="47" fill="#2e2e2e" />
<rect x="3" y="535" width="601" height="2" fill="#858585" />
<defs>
<linearGradient id="g0" x1="0" x2="1"><stop offset="0" stop-color="#6e6a14"/><stop offset="1" stop-color="#4a4810"/></linearGradient>
<linearGradient id="g1" x1="0" x2="1"><stop offset="0" stop-color="#167078"/><stop offset="1" stop-color="#0e4448"/></linearGradient>
<linearGradient id="g2" x1="0" x2="1"><stop offset="0" stop-color="#7a2438"/><stop offset="1" stop-color="#4a1420"/></linearGradient>
<linearGradient id="g3" x1="0" x2="1"><stop offset="0" stop-color="#3c6a1c"/><stop offset="1" stop-color="#244412"/></linearGradient>
<linearGradient id="g4" x1="0" x2="1"><stop offset="0" stop-color="#7a4418"/><stop offset="1" stop-color="#4a2a10"/></linearGradient>
<linearGradient id="g5" x1="0" x2="1"><stop offset="0" stop-color="#24246e"/><stop offset="1" stop-color="#161648"/></linearGradient>
<linearGradient id="g6" x1="0" x2="1"><stop offset="0" stop-color="#6a4418"/><stop offset="1" stop-color="#402a10"/></linearGradient>
<linearGradient id="g7" x1="0" x2="1"><stop offset="0" stop-color="#3c2c5c"/><stop offset="1" stop-color="#241a3c"/></linearGradient>
<linearGradient id="g8" x1="0" x2="1"><stop offset="0" stop-color="#d82020"/><stop offset="1" stop-color="#c01818"/></linearGradient>
<linearGradient id="g9" x1="0" x2="1"><stop offset="0" stop-color="#5a1c1c"/><stop offset="1" stop-color="#3a1212"/></linearGradient>
</defs>
<rect x="4" y="537" width="51.3" height="11" fill="url(#g0)"/>
<text x="7.7" y="546.8" font-size="8.7" fill="#e8e800" font-weight="normal" text-anchor="start" textLength="16.54" lengthAdjust="spacingAndGlyphs" >Ch 1</text>
<rect x="4" y="548" width="51.3" height="33.7" rx="2" fill="#d6d6d6"/>
<text x="7.7" y="557.2" font-size="8.2" fill="#505050" font-weight="normal" text-anchor="start" textLength="27.55" lengthAdjust="spacingAndGlyphs" >10 V/div</text>
<path d="M34.3 563.6C34.8 561.2 36 561.2 36.9 563.8S39 568 40.2 565.4" fill="none" stroke="#505050" stroke-width="1.1"/>
<text x="7.7" y="568.0" font-size="8.2" fill="#505050" font-weight="normal" text-anchor="start" textLength="18.41" lengthAdjust="spacingAndGlyphs" >1 MΩ</text>
<text x="7.7" y="578.8000000000001" font-size="8.2" fill="#505050" font-weight="normal" text-anchor="start" textLength="20.20" lengthAdjust="spacingAndGlyphs" >1 THz</text>
<rect x="57.5" y="537" width="51.3" height="11" fill="url(#g1)"/>
<text x="61.2" y="546.8" font-size="8.7" fill="#38d0e0" font-weight="normal" text-anchor="start" textLength="16.54" lengthAdjust="spacingAndGlyphs" >Ch 2</text>
<rect x="57.5" y="548" width="51.3" height="33.7" rx="2" fill="#d6d6d6"/>
<text x="61.2" y="557.2" font-size="8.2" fill="#505050" font-weight="normal" text-anchor="start" textLength="38.15" lengthAdjust="spacingAndGlyphs" >500 mV/div</text>
<path d="M87.8 563.6C88.3 561.2 89.5 561.2 90.4 563.8S92.5 568 93.7 565.4" fill="none" stroke="#505050" stroke-width="1.1"/>
<text x="61.2" y="568.0" font-size="8.2" fill="#505050" font-weight="normal" text-anchor="start" textLength="18.41" lengthAdjust="spacingAndGlyphs" >1 MΩ</text>
<text x="61.2" y="578.8000000000001" font-size="8.2" fill="#505050" font-weight="normal" text-anchor="start" textLength="20.20" lengthAdjust="spacingAndGlyphs" >1 THz</text>
<rect x="110.5" y="537" width="51.3" height="11" fill="url(#g2)"/>
<text x="114.2" y="546.8" font-size="8.7" fill="#f8a0b0" font-weight="normal" text-anchor="start" textLength="16.54" lengthAdjust="spacingAndGlyphs" >Ch 3</text>
<rect x="110.5" y="548" width="51.3" height="33.7" rx="2" fill="#d6d6d6"/>
<text x="114.2" y="557.2" font-size="8.2" fill="#505050" font-weight="normal" text-anchor="start" textLength="27.55" lengthAdjust="spacingAndGlyphs" >10 V/div</text>
<path d="M140.8 563.6C141.3 561.2 142.5 561.2 143.4 563.8S145.5 568 146.7 565.4" fill="none" stroke="#505050" stroke-width="1.1"/>
<text x="114.2" y="568.0" font-size="8.2" fill="#505050" font-weight="normal" text-anchor="start" textLength="18.41" lengthAdjust="spacingAndGlyphs" >1 MΩ</text>
<text x="114.2" y="578.8000000000001" font-size="8.2" fill="#505050" font-weight="normal" text-anchor="start" textLength="20.20" lengthAdjust="spacingAndGlyphs" >1 THz</text>
<rect x="164" y="537" width="51.3" height="11" fill="url(#g3)"/>
<text x="167.7" y="546.8" font-size="8.7" fill="#98e848" font-weight="normal" text-anchor="start" textLength="16.54" lengthAdjust="spacingAndGlyphs" >Ch 4</text>
<rect x="164" y="548" width="51.3" height="33.7" rx="2" fill="#d6d6d6"/>
<text x="167.7" y="557.2" font-size="8.2" fill="#505050" font-weight="normal" text-anchor="start" textLength="38.15" lengthAdjust="spacingAndGlyphs" >575 mV/div</text>
<path d="M194.3 563.6C194.8 561.2 196 561.2 196.9 563.8S199 568 200.2 565.4" fill="none" stroke="#505050" stroke-width="1.1"/>
<text x="167.7" y="568.0" font-size="8.2" fill="#505050" font-weight="normal" text-anchor="start" textLength="18.41" lengthAdjust="spacingAndGlyphs" >1 MΩ</text>
<text x="167.7" y="578.8000000000001" font-size="8.2" fill="#505050" font-weight="normal" text-anchor="start" textLength="20.20" lengthAdjust="spacingAndGlyphs" >1 THz</text>
<rect x="217" y="537" width="51.3" height="11" fill="url(#g4)"/>
<text x="220.7" y="546.8" font-size="8.7" fill="#f8a848" font-weight="normal" text-anchor="start" textLength="16.54" lengthAdjust="spacingAndGlyphs" >Ch 5</text>
<rect x="217" y="548" width="51.3" height="33.7" rx="2" fill="#d6d6d6"/>
<text x="220.7" y="557.2" font-size="8.2" fill="#505050" font-weight="normal" text-anchor="start" textLength="27.55" lengthAdjust="spacingAndGlyphs" >10 V/div</text>
<path d="M247.3 563.6C247.8 561.2 249 561.2 249.9 563.8S252 568 253.2 565.4" fill="none" stroke="#505050" stroke-width="1.1"/>
<text x="220.7" y="568.0" font-size="8.2" fill="#505050" font-weight="normal" text-anchor="start" textLength="18.41" lengthAdjust="spacingAndGlyphs" >1 MΩ</text>
<text x="220.7" y="578.8000000000001" font-size="8.2" fill="#505050" font-weight="normal" text-anchor="start" textLength="20.20" lengthAdjust="spacingAndGlyphs" >1 THz</text>
<rect x="270" y="537" width="51.3" height="11" fill="url(#g5)"/>
<text x="273.7" y="546.8" font-size="8.7" fill="#c8c8ff" font-weight="normal" text-anchor="start" textLength="16.54" lengthAdjust="spacingAndGlyphs" >Ch 6</text>
<rect x="270" y="548" width="51.3" height="33.7" rx="2" fill="#d6d6d6"/>
<text x="273.7" y="557.2" font-size="8.2" fill="#505050" font-weight="normal" text-anchor="start" textLength="38.15" lengthAdjust="spacingAndGlyphs" >550 mV/div</text>
<path d="M300.3 563.6C300.8 561.2 302 561.2 302.9 563.8S305 568 306.2 565.4" fill="none" stroke="#505050" stroke-width="1.1"/>
<text x="273.7" y="568.0" font-size="8.2" fill="#505050" font-weight="normal" text-anchor="start" textLength="18.41" lengthAdjust="spacingAndGlyphs" >1 MΩ</text>
<text x="273.7" y="578.8000000000001" font-size="8.2" fill="#505050" font-weight="normal" text-anchor="start" textLength="20.20" lengthAdjust="spacingAndGlyphs" >1 THz</text>
<rect x="323.5" y="537" width="51.3" height="11" fill="url(#g6)"/>
<text x="327.2" y="546.8" font-size="8.7" fill="#f8a030" font-weight="normal" text-anchor="start" textLength="23.94" lengthAdjust="spacingAndGlyphs" >Math 1</text>
<rect x="323.5" y="548" width="51.3" height="33.7" rx="2" fill="#d6d6d6"/>
<text x="327.2" y="557.2" font-size="8.2" fill="#505050" font-weight="normal" text-anchor="start" textLength="42.39" lengthAdjust="spacingAndGlyphs" >1.8502 V/div</text>
<text x="327.2" y="568.0" font-size="8.2" fill="#505050" font-weight="normal" text-anchor="start" textLength="38.57" lengthAdjust="spacingAndGlyphs" >Static[low...</text>
<text x="327.2" y="578.8000000000001" font-size="8.2" fill="#505050" font-weight="normal" text-anchor="start" textLength="25.01" lengthAdjust="spacingAndGlyphs" >Meas 1</text>
<rect x="377" y="537" width="51.3" height="11" fill="url(#g7)"/>
<text x="380.7" y="546.8" font-size="8.7" fill="#e8e8f8" font-weight="normal" text-anchor="start" textLength="23.94" lengthAdjust="spacingAndGlyphs" >Math 2</text>
<rect x="377" y="548" width="51.3" height="33.7" rx="2" fill="#d6d6d6"/>
<text x="380.7" y="557.2" font-size="8.2" fill="#505050" font-weight="normal" text-anchor="start" textLength="42.39" lengthAdjust="spacingAndGlyphs" >1.8502 V/div</text>
<text x="380.7" y="568.0" font-size="8.2" fill="#505050" font-weight="normal" text-anchor="start" textLength="38.57" lengthAdjust="spacingAndGlyphs" >Static[low...</text>
<text x="380.7" y="578.8000000000001" font-size="8.2" fill="#505050" font-weight="normal" text-anchor="start" textLength="25.01" lengthAdjust="spacingAndGlyphs" >Meas 2</text>
<rect x="430.5" y="537" width="51.3" height="11" fill="url(#g8)"/>
<text x="434.2" y="546.8" font-size="8.7" fill="#ffffff" font-weight="normal" text-anchor="start" textLength="23.94" lengthAdjust="spacingAndGlyphs" >Math 3</text>
<rect x="430.5" y="548" width="51.3" height="33.7" rx="2" fill="#d6d6d6"/>
<text x="434.2" y="557.2" font-size="8.2" fill="#505050" font-weight="normal" text-anchor="start" textLength="40.42" lengthAdjust="spacingAndGlyphs" >10.0364 V...</text>
<text x="434.2" y="568.0" font-size="8.2" fill="#505050" font-weight="normal" text-anchor="start" textLength="14.83" lengthAdjust="spacingAndGlyphs" >-ch5</text>
<text x="434.2" y="578.8000000000001" font-size="8.2" fill="#505050" font-weight="normal" text-anchor="start"  ></text>
<rect x="483.5" y="537" width="51.3" height="11" fill="url(#g9)"/>
<text x="487.2" y="546.8" font-size="8.7" fill="#f0d8d8" font-weight="normal" text-anchor="start" textLength="26.69" lengthAdjust="spacingAndGlyphs" >Trend 2</text>
<rect x="483.5" y="548" width="51.3" height="33.7" rx="2" fill="#d6d6d6"/>
<text x="487.2" y="557.2" font-size="8.2" fill="#505050" font-weight="normal" text-anchor="start" textLength="36.04" lengthAdjust="spacingAndGlyphs" >15.9182 ...</text>
<text x="487.2" y="568.0" font-size="8.2" fill="#505050" font-weight="normal" text-anchor="start" textLength="40.68" lengthAdjust="spacingAndGlyphs" >Cyc Powe...</text>
<text x="487.2" y="578.8000000000001" font-size="8.2" fill="#505050" font-weight="normal" text-anchor="start" textLength="25.01" lengthAdjust="spacingAndGlyphs" >Meas 1</text>
<line x1="848.3" y1="537" x2="848.3" y2="582" stroke="#444" stroke-width="1"/>
<rect x="855.5" y="539.5" width="21.5" height="42" rx="2.5" fill="#242424" stroke="#484848" stroke-width="1"/>
<rect x="857.5" y="542.5" width="17.5" height="1.8" fill="#a8b828" />
<text x="866.25" y="556.3" font-size="8.5" fill="#b8b8b8" font-weight="normal" text-anchor="middle" textLength="13.91" lengthAdjust="spacingAndGlyphs" >Add</text>
<text x="866.25" y="565.6999999999999" font-size="8.5" fill="#b8b8b8" font-weight="normal" text-anchor="middle" textLength="15.64" lengthAdjust="spacingAndGlyphs" >New</text>
<text x="866.25" y="575.0999999999999" font-size="8.5" fill="#b8b8b8" font-weight="normal" text-anchor="middle" textLength="17.38" lengthAdjust="spacingAndGlyphs" >Math</text>
<rect x="880.5" y="539.5" width="21.5" height="42" rx="2.5" fill="#242424" stroke="#484848" stroke-width="1"/>
<rect x="882.5" y="542.5" width="17.5" height="1.8" fill="#d0d020" />
<text x="891.25" y="556.3" font-size="8.5" fill="#b8b8b8" font-weight="normal" text-anchor="middle" textLength="13.91" lengthAdjust="spacingAndGlyphs" >Add</text>
<text x="891.25" y="565.6999999999999" font-size="8.5" fill="#b8b8b8" font-weight="normal" text-anchor="middle" textLength="15.64" lengthAdjust="spacingAndGlyphs" >New</text>
<text x="891.25" y="575.0999999999999" font-size="8.5" fill="#b8b8b8" font-weight="normal" text-anchor="middle" textLength="12.17" lengthAdjust="spacingAndGlyphs" >Ref</text>
<rect x="905.5" y="539.5" width="21.5" height="42" rx="2.5" fill="#242424" stroke="#484848" stroke-width="1"/>
<rect x="907.5" y="542.5" width="17.5" height="1.8" fill="#9858d8" />
<text x="916.25" y="556.3" font-size="8.5" fill="#b8b8b8" font-weight="normal" text-anchor="middle" textLength="13.91" lengthAdjust="spacingAndGlyphs" >Add</text>
<text x="916.25" y="565.6999999999999" font-size="8.5" fill="#b8b8b8" font-weight="normal" text-anchor="middle" textLength="15.64" lengthAdjust="spacingAndGlyphs" >New</text>
<text x="916.25" y="575.0999999999999" font-size="8.5" fill="#b8b8b8" font-weight="normal" text-anchor="middle" textLength="13.47" lengthAdjust="spacingAndGlyphs" >Bus</text>
<rect x="930.5" y="539.5" width="21.5" height="42" rx="2.5" fill="#242424" stroke="#484848" stroke-width="1"/>
<rect x="932.5" y="542.5" width="17.5" height="1.8" fill="#4e4e4e" />
<text x="941.25" y="556.3" font-size="8.5" fill="#b8b8b8" font-weight="normal" text-anchor="middle" textLength="13.91" lengthAdjust="spacingAndGlyphs" >Add</text>
<text x="941.25" y="565.6999999999999" font-size="8.5" fill="#b8b8b8" font-weight="normal" text-anchor="middle" textLength="15.64" lengthAdjust="spacingAndGlyphs" >New</text>
<text x="941.25" y="575.0999999999999" font-size="8.5" fill="#b8b8b8" font-weight="normal" text-anchor="middle" textLength="22.17" lengthAdjust="spacingAndGlyphs" >Scope</text>
<line x1="1017.5" y1="537" x2="1017.5" y2="582" stroke="#1e1e1e" stroke-width="1.5"/>
<rect x="958.7" y="539.6" width="53.3" height="9.1" fill="#5e5e5e" />
<text x="961" y="547.5" font-size="9" fill="#f0f0f0" font-weight="normal" text-anchor="start"  >Horizontal</text>
<rect x="958.7" y="548.7" width="53.3" height="32.5" fill="#d6d6d6" />
<text x="961" y="557.5" font-size="8" fill="#303030" font-weight="normal" text-anchor="start"  >10 ms/div</text>
<rect x="1024.7" y="538.7" width="50" height="19" rx="2.5" fill="#d2d2d2"/>
<text x="1049.7" y="551.2" font-size="8" fill="#1a1a1a" font-weight="bold" text-anchor="middle"  >Offline</text>
<rect x="1025" y="561.6" width="50" height="19.6" rx="2" fill="#d2d2d2"/>
<text x="1049.7" y="569.8" font-size="8.5" fill="#3a3a3a" font-weight="normal" text-anchor="middle" textLength="44.83" lengthAdjust="spacingAndGlyphs" >17 Nov 2021</text>
<text x="1049.7" y="578.8" font-size="8.5" fill="#3a3a3a" font-weight="normal" text-anchor="middle" textLength="40.43" lengthAdjust="spacingAndGlyphs" >7:22:38 PM</text>
</svg>
</body></html>
